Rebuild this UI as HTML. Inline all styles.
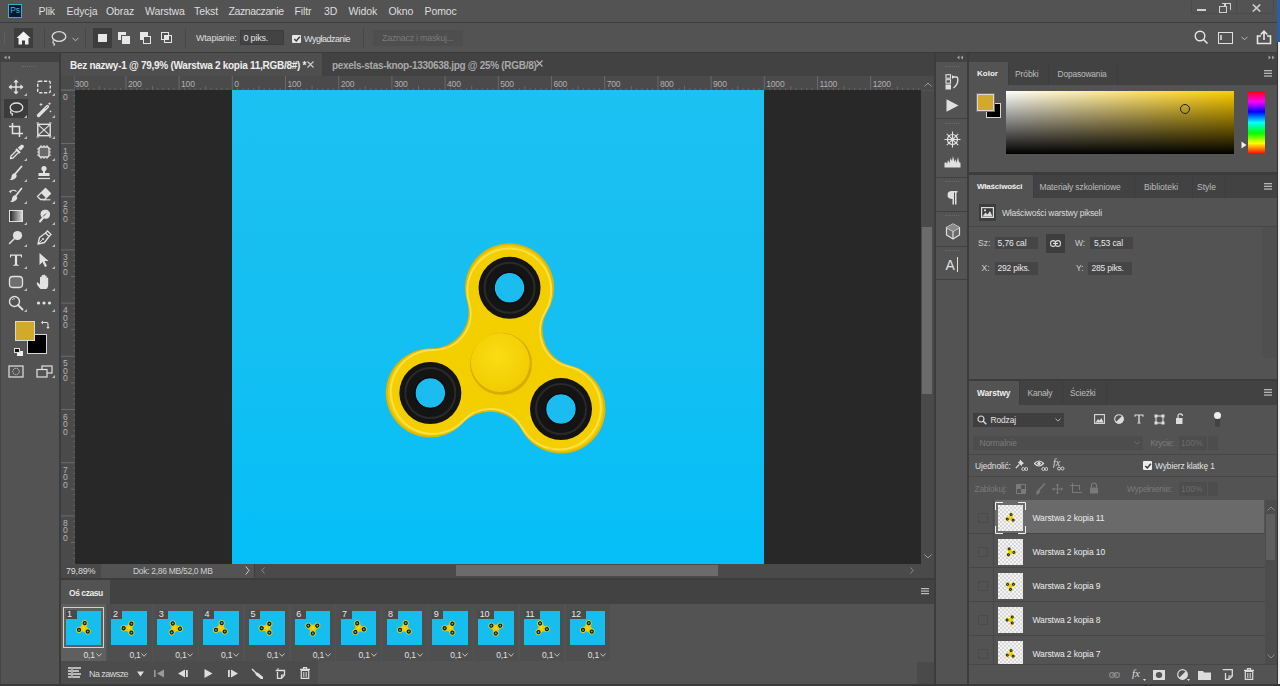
<!DOCTYPE html>
<html><head><meta charset="utf-8">
<style>
*{margin:0;padding:0;box-sizing:border-box}
html,body{width:1280px;height:686px;overflow:hidden;background:#535353;font-family:"Liberation Sans",sans-serif;color:#e8e8e8}
.a{position:absolute}
.t{position:absolute;white-space:nowrap;line-height:1}
</style></head><body>
<!-- menu bar -->
<div class="a" style="left:0;top:0;width:1280px;height:22px;background:#535353"></div>
<div class="a" style="left:0;top:22px;width:1280px;height:1px;background:#3c3c3c"></div>
<!-- options bar -->
<div class="a" style="left:0;top:23px;width:1280px;height:29px;background:#535353"></div>
<div class="a" style="left:0;top:52px;width:1280px;height:1px;background:#3a3a3a"></div>
<!-- toolbar -->
<div class="a" style="left:0;top:53px;width:59px;height:633px;background:#535353"></div>
<div class="a" style="left:0;top:53px;width:59px;height:9px;background:#424242"></div>
<div class="a" style="left:59px;top:53px;width:2px;height:633px;background:#3c3c3c"></div>
<!-- tab bar -->
<div class="a" style="left:61px;top:53px;width:873px;height:23px;background:#424242"></div>
<div class="a" style="left:61px;top:53px;width:261px;height:23px;background:#4e4e4e"></div>
<!-- rulers -->
<div class="a" style="left:61px;top:76px;width:873px;height:14px;background:#4a4a4a"></div>
<div class="a" style="left:61px;top:76px;width:14px;height:488px;background:#4a4a4a"></div>
<!-- pasteboard -->
<div class="a" style="left:75px;top:90px;width:846px;height:474px;background:#282828"></div>
<div class="a" style="left:232px;top:90px;width:532px;height:474px;background:linear-gradient(to bottom,#1cc1f1 0%,#15bff2 50%,#04bff7 100%)"></div>
<svg width="0" height="0" style="position:absolute"><defs>
<radialGradient id="hubg" cx="0.45" cy="0.4" r="0.6"><stop offset="0" stop-color="#fbdc16"/><stop offset="1" stop-color="#f2cc00"/></radialGradient>
<g id="spin"><path d="M-32.35 -62.75 A43.5 43.5 0 1 1 46.57 -53.06 A37.91 37.91 0 0 0 70.52 3.36 A43.5 43.5 0 1 1 22.67 66.86 A37.91 37.91 0 0 0 -38.17 59.39 A43.5 43.5 0 1 1 -69.24 -13.80 A37.91 37.91 0 0 0 -32.35 -62.75 Z" fill="#f4cf00" stroke="#e2b800" stroke-width="2"/><path d="M-32.35 -62.75 A43.5 43.5 0 1 1 46.57 -53.06 A37.91 37.91 0 0 0 70.52 3.36 A43.5 43.5 0 1 1 22.67 66.86 A37.91 37.91 0 0 0 -38.17 59.39 A43.5 43.5 0 1 1 -69.24 -13.80 A37.91 37.91 0 0 0 -32.35 -62.75 Z" fill="none" stroke="#fbe04a" stroke-width="2" transform="scale(0.965)"/><circle cx="9.26" cy="-75.43" r="31" fill="#141414"/><circle cx="9.26" cy="-75.43" r="25" fill="none" stroke="#2a2a2a" stroke-width="2"/><circle cx="9.26" cy="-75.43" r="15" fill="#1bbdf0"/><circle cx="9.26" cy="-75.43" r="15.5" fill="none" stroke="#0c0c0c" stroke-width="1.5"/><circle cx="60.7" cy="45.74" r="31" fill="#141414"/><circle cx="60.7" cy="45.74" r="25" fill="none" stroke="#2a2a2a" stroke-width="2"/><circle cx="60.7" cy="45.74" r="15" fill="#1bbdf0"/><circle cx="60.7" cy="45.74" r="15.5" fill="none" stroke="#0c0c0c" stroke-width="1.5"/><circle cx="-69.96" cy="29.7" r="31" fill="#141414"/><circle cx="-69.96" cy="29.7" r="25" fill="none" stroke="#2a2a2a" stroke-width="2"/><circle cx="-69.96" cy="29.7" r="15" fill="#1bbdf0"/><circle cx="-69.96" cy="29.7" r="15.5" fill="none" stroke="#0c0c0c" stroke-width="1.5"/><circle cx="0.8" cy="0.5" r="31" fill="#d6ad00"/><circle cx="0" cy="-0.8" r="29.5" fill="url(#hubg)"/></g>
</defs></svg>
<svg class="a" style="left:232px;top:90px" width="532" height="474" viewBox="232 90 532 474"><use href="#spin" transform="translate(500.3 363.3)"/></svg>
<!-- v scrollbar -->
<div class="a" style="left:921px;top:91px;width:13px;height:473px;background:#4a4a4a"></div>
<div class="a" style="left:922px;top:227px;width:10px;height:167px;background:#6b6b6b"></div>
<!-- status bar -->
<div class="a" style="left:61px;top:564px;width:873px;height:14px;background:#4a4a4a"></div>
<div class="a" style="left:456px;top:565px;width:262px;height:11px;background:#6b6b6b"></div>
<div class="a" style="left:61px;top:578px;width:873px;height:2px;background:#3c3c3c"></div>
<!-- timeline -->
<div class="a" style="left:61px;top:580px;width:873px;height:24px;background:#424242"></div>
<div class="a" style="left:61px;top:580px;width:49px;height:24px;background:#535353"></div>
<div class="a" style="left:61px;top:604px;width:873px;height:82px;background:#535353"></div>
<!-- icon strip -->
<div class="a" style="left:934px;top:53px;width:2px;height:633px;background:#3c3c3c"></div>
<div class="a" style="left:936px;top:53px;width:31px;height:633px;background:#535353"></div>
<div class="a" style="left:936px;top:53px;width:31px;height:9px;background:#424242"></div>
<div class="a" style="left:967px;top:53px;width:2px;height:633px;background:#3c3c3c"></div>
<!-- right panels -->
<div class="a" style="left:969px;top:53px;width:308px;height:9px;background:#424242"></div>
<div class="a" style="left:969px;top:62px;width:308px;height:23px;background:#424242"></div>
<div class="a" style="left:969px;top:62px;width:39px;height:23px;background:#535353"></div>
<div class="a" style="left:969px;top:172px;width:308px;height:3px;background:#3c3c3c"></div>
<div class="a" style="left:969px;top:175px;width:308px;height:23px;background:#424242"></div>
<div class="a" style="left:969px;top:175px;width:64px;height:23px;background:#535353"></div>
<div class="a" style="left:969px;top:379px;width:308px;height:2px;background:#3c3c3c"></div>
<div class="a" style="left:969px;top:381px;width:308px;height:24px;background:#424242"></div>
<div class="a" style="left:969px;top:381px;width:50px;height:24px;background:#535353"></div>
<div class="a" style="left:1277px;top:0;width:3px;height:42px;background:#2b5ea6"></div>
<div class="a" style="left:1277px;top:42px;width:1px;height:644px;background:#333"></div>
<div class="a" style="left:1278px;top:42px;width:2px;height:644px;background:#f0f0f0"></div>

<!-- MENU CONTENT -->
<div class="a" style="left:8px;top:4px;width:14px;height:14px;background:#001b2e;border:1.3px solid #3aaad8"></div>
<div class="t" style="left:10.3px;top:6.3px;font-size:8.5px;font-weight:400;color:#48b6de;letter-spacing:-0.3px">Ps</div>
<div class="t" style="left:38.5px;top:6px;font-size:10.5px;color:#dedede;letter-spacing:-0.1px">Plik</div>
<div class="t" style="left:66.5px;top:6px;font-size:10.5px;color:#dedede;letter-spacing:-0.1px">Edycja</div>
<div class="t" style="left:106px;top:6px;font-size:10.5px;color:#dedede;letter-spacing:-0.1px">Obraz</div>
<div class="t" style="left:145px;top:6px;font-size:10.5px;color:#dedede;letter-spacing:-0.1px">Warstwa</div>
<div class="t" style="left:194px;top:6px;font-size:10.5px;color:#dedede;letter-spacing:-0.1px">Tekst</div>
<div class="t" style="left:228.5px;top:6px;font-size:10.5px;color:#dedede;letter-spacing:-0.4px">Zaznaczanie</div>
<div class="t" style="left:294.5px;top:6px;font-size:10.5px;color:#dedede;letter-spacing:-0.1px">Filtr</div>
<div class="t" style="left:324px;top:6px;font-size:10.5px;color:#dedede;letter-spacing:-0.1px">3D</div>
<div class="t" style="left:348.5px;top:6px;font-size:10.5px;color:#dedede;letter-spacing:-0.1px">Widok</div>
<div class="t" style="left:388.5px;top:6px;font-size:10.5px;color:#dedede;letter-spacing:-0.1px">Okno</div>
<div class="t" style="left:424.5px;top:6px;font-size:10.5px;color:#dedede;letter-spacing:-0.1px">Pomoc</div>
<!-- window controls -->
<div class="a" style="left:1191px;top:-1px;width:83px;height:15px;border:1px solid #4b4b4b"></div>
<div class="a" style="left:1236px;top:0;width:1px;height:14px;background:#4b4b4b"></div>
<div class="a" style="left:1197px;top:9px;width:9px;height:2px;background:#d0d0d0"></div>
<div class="a" style="left:1219px;top:6px;width:8px;height:7px;border:1.5px solid #d0d0d0"></div>
<div class="a" style="left:1222px;top:3px;width:9px;height:7px;border:1.5px solid #d0d0d0;border-left:none;border-bottom:none"></div>
<div class="a" style="left:1224px;top:3px;width:1.5px;height:3px;background:#d0d0d0"></div>
<svg class="a" style="left:1252px;top:4px" width="9" height="8" viewBox="0 0 9 8"><path d="M0.8 0.5L8.2 7.5M8.2 0.5L0.8 7.5" stroke="#d0d0d0" stroke-width="1.6"/></svg>
<!-- OPTIONS CONTENT -->
<div class="a" style="left:4px;top:32px;width:1px;height:11px;border-left:1px dotted #6a6a6a"></div>
<div class="a" style="left:14px;top:28px;width:19px;height:20px;background:#3d3d3d"></div>
<svg class="a" style="left:16px;top:31px" width="15" height="14" viewBox="0 0 15 14"><path d="M7.5 0.5L0.5 7H2.5V13.5H6V9.5H9V13.5H12.5V7H14.5Z" fill="#f2f2f2"/></svg>
<div class="a" style="left:44px;top:28px;width:1px;height:20px;background:#474747"></div>
<svg class="a" style="left:50px;top:30px" width="17" height="16" viewBox="0 0 17 16"><ellipse cx="9" cy="6.5" rx="6.8" ry="4.8" fill="none" stroke="#dcdcdc" stroke-width="1.3"/><path d="M4 10.5C2.5 11 2.5 13 4 13.5C5 14 4.5 15 3.5 15.5" fill="none" stroke="#dcdcdc" stroke-width="1.2"/></svg>
<svg class="a" style="left:72px;top:37px" width="7" height="5" viewBox="0 0 7 5"><path d="M0.5 0.8L3.5 3.8L6.5 0.8" fill="none" stroke="#bdbdbd" stroke-width="1"/></svg>
<div class="a" style="left:85px;top:28px;width:1px;height:20px;background:#474747"></div>
<div class="a" style="left:93px;top:28px;width:19px;height:20px;background:#3d3d3d"></div>
<div class="a" style="left:98px;top:34px;width:9px;height:8px;background:#e6e6e6"></div>
<div class="a" style="left:118px;top:32px;width:8px;height:8px;background:#e6e6e6"></div>
<div class="a" style="left:122px;top:36px;width:8px;height:8px;background:#e6e6e6;box-shadow:-1px -1px 0 #535353"></div>
<div class="a" style="left:140px;top:32px;width:8px;height:8px;background:#e6e6e6"></div>
<div class="a" style="left:143px;top:36px;width:8px;height:8px;background:#535353;border:1.3px solid #e6e6e6"></div>
<div class="a" style="left:161px;top:32px;width:8px;height:8px;border:1.3px solid #e6e6e6"></div>
<div class="a" style="left:164px;top:35px;width:8px;height:8px;border:1.3px solid #e6e6e6"></div>
<div class="a" style="left:164px;top:35px;width:5px;height:5px;background:#e6e6e6"></div>
<div class="a" style="left:185px;top:28px;width:1px;height:20px;background:#474747"></div>
<div class="t" style="left:196px;top:34px;font-size:9px;color:#dcdcdc;letter-spacing:-0.2px">Wtapianie:</div>
<div class="a" style="left:240px;top:30px;width:44px;height:15px;background:#434343;border:1px solid #3c3c3c"></div>
<div class="t" style="left:243.5px;top:33.5px;font-size:9px;color:#e2e2e2;letter-spacing:-0.2px">0 piks.</div>
<div class="a" style="left:292px;top:35px;width:9px;height:8px;background:#e6e6e6;border-radius:1px"></div>
<svg class="a" style="left:293px;top:35px" width="8" height="8" viewBox="0 0 8 8"><path d="M1.3 4L3.3 6L6.8 1.8" fill="none" stroke="#3a3a3a" stroke-width="1.4"/></svg>
<div class="t" style="left:304px;top:34.5px;font-size:9px;color:#e2e2e2;letter-spacing:-0.5px">Wygładzanie</div>
<div class="a" style="left:363px;top:28px;width:1px;height:20px;background:#474747"></div>
<div class="a" style="left:373px;top:30px;width:90px;height:16px;background:#4e4e4e;border-radius:1px"></div>
<div class="t" style="left:382px;top:34px;font-size:9px;color:#7a7a7a;letter-spacing:-0.3px">Zaznacz i maskuj...</div>
<svg class="a" style="left:1194px;top:30px" width="15" height="15" viewBox="0 0 15 15"><circle cx="6" cy="6" r="4.8" fill="none" stroke="#e6e6e6" stroke-width="1.4"/><path d="M9.5 9.5L13.5 13.5" stroke="#e6e6e6" stroke-width="1.6"/></svg>
<div class="a" style="left:1218px;top:32px;width:15px;height:12px;border:1.3px solid #e0e0e0"></div>
<div class="a" style="left:1220px;top:35px;width:2px;height:5px;border:1px solid #c0c0c0"></div>
<svg class="a" style="left:1241px;top:36px" width="7" height="5" viewBox="0 0 7 5"><path d="M0.5 0.8L3.5 3.8L6.5 0.8" fill="none" stroke="#bdbdbd" stroke-width="1"/></svg>
<svg class="a" style="left:1256px;top:30px" width="16" height="15" viewBox="0 0 16 15"><path d="M5 6H1.5V13.5H14.5V6H11" fill="none" stroke="#e6e6e6" stroke-width="1.6"/><path d="M8 10V1.5M4.8 4.5L8 1.2L11.2 4.5" fill="none" stroke="#e6e6e6" stroke-width="1.6"/></svg>
<!-- TABS -->
<div class="t" style="left:70px;top:61px;font-size:10px;font-weight:700;color:#eeeeee;letter-spacing:-0.27px">Bez nazwy-1 @ 79,9% (Warstwa 2 kopia 11,RGB/8#) *</div>
<svg class="a" style="left:307px;top:61px" width="7" height="7" viewBox="0 0 7 7"><path d="M0.5 0.5L6.5 6.5M6.5 0.5L0.5 6.5" stroke="#cfcfcf" stroke-width="1.1"/></svg>
<div class="t" style="left:332px;top:61px;font-size:10px;font-weight:700;color:#a9a9a9;letter-spacing:-0.3px">pexels-stas-knop-1330638.jpg @ 25% (RGB/8)</div>
<svg class="a" style="left:536px;top:60px" width="7" height="7" viewBox="0 0 7 7"><path d="M0.5 0.5L6.5 6.5M6.5 0.5L0.5 6.5" stroke="#b9b9b9" stroke-width="1.1"/></svg>
<svg class="a" style="left:75px;top:76px" width="846" height="14" viewBox="75 76 846 14">
<rect x="77.52" y="88" width="1" height="2" fill="#666"/>
<rect x="82.84" y="88" width="1" height="2" fill="#666"/>
<rect x="88.16" y="88" width="1" height="2" fill="#666"/>
<rect x="93.48" y="88" width="1" height="2" fill="#666"/>
<rect x="98.80" y="86" width="1" height="4" fill="#6a6a6a"/>
<rect x="104.12" y="88" width="1" height="2" fill="#666"/>
<rect x="109.44" y="88" width="1" height="2" fill="#666"/>
<rect x="114.76" y="88" width="1" height="2" fill="#666"/>
<rect x="120.08" y="88" width="1" height="2" fill="#666"/>
<rect x="125.40" y="76" width="1" height="14" fill="#6a6a6a"/>
<rect x="130.72" y="88" width="1" height="2" fill="#666"/>
<rect x="136.04" y="88" width="1" height="2" fill="#666"/>
<rect x="141.36" y="88" width="1" height="2" fill="#666"/>
<rect x="146.68" y="88" width="1" height="2" fill="#666"/>
<rect x="152.00" y="86" width="1" height="4" fill="#6a6a6a"/>
<rect x="157.32" y="88" width="1" height="2" fill="#666"/>
<rect x="162.64" y="88" width="1" height="2" fill="#666"/>
<rect x="167.96" y="88" width="1" height="2" fill="#666"/>
<rect x="173.28" y="88" width="1" height="2" fill="#666"/>
<rect x="178.60" y="76" width="1" height="14" fill="#6a6a6a"/>
<rect x="183.92" y="88" width="1" height="2" fill="#666"/>
<rect x="189.24" y="88" width="1" height="2" fill="#666"/>
<rect x="194.56" y="88" width="1" height="2" fill="#666"/>
<rect x="199.88" y="88" width="1" height="2" fill="#666"/>
<rect x="205.20" y="86" width="1" height="4" fill="#6a6a6a"/>
<rect x="210.52" y="88" width="1" height="2" fill="#666"/>
<rect x="215.84" y="88" width="1" height="2" fill="#666"/>
<rect x="221.16" y="88" width="1" height="2" fill="#666"/>
<rect x="226.48" y="88" width="1" height="2" fill="#666"/>
<rect x="231.80" y="76" width="1" height="14" fill="#6a6a6a"/>
<rect x="237.12" y="88" width="1" height="2" fill="#666"/>
<rect x="242.44" y="88" width="1" height="2" fill="#666"/>
<rect x="247.76" y="88" width="1" height="2" fill="#666"/>
<rect x="253.08" y="88" width="1" height="2" fill="#666"/>
<rect x="258.40" y="86" width="1" height="4" fill="#6a6a6a"/>
<rect x="263.72" y="88" width="1" height="2" fill="#666"/>
<rect x="269.04" y="88" width="1" height="2" fill="#666"/>
<rect x="274.36" y="88" width="1" height="2" fill="#666"/>
<rect x="279.68" y="88" width="1" height="2" fill="#666"/>
<rect x="285.00" y="76" width="1" height="14" fill="#6a6a6a"/>
<rect x="290.32" y="88" width="1" height="2" fill="#666"/>
<rect x="295.64" y="88" width="1" height="2" fill="#666"/>
<rect x="300.96" y="88" width="1" height="2" fill="#666"/>
<rect x="306.28" y="88" width="1" height="2" fill="#666"/>
<rect x="311.60" y="86" width="1" height="4" fill="#6a6a6a"/>
<rect x="316.92" y="88" width="1" height="2" fill="#666"/>
<rect x="322.24" y="88" width="1" height="2" fill="#666"/>
<rect x="327.56" y="88" width="1" height="2" fill="#666"/>
<rect x="332.88" y="88" width="1" height="2" fill="#666"/>
<rect x="338.20" y="76" width="1" height="14" fill="#6a6a6a"/>
<rect x="343.52" y="88" width="1" height="2" fill="#666"/>
<rect x="348.84" y="88" width="1" height="2" fill="#666"/>
<rect x="354.16" y="88" width="1" height="2" fill="#666"/>
<rect x="359.48" y="88" width="1" height="2" fill="#666"/>
<rect x="364.80" y="86" width="1" height="4" fill="#6a6a6a"/>
<rect x="370.12" y="88" width="1" height="2" fill="#666"/>
<rect x="375.44" y="88" width="1" height="2" fill="#666"/>
<rect x="380.76" y="88" width="1" height="2" fill="#666"/>
<rect x="386.08" y="88" width="1" height="2" fill="#666"/>
<rect x="391.40" y="76" width="1" height="14" fill="#6a6a6a"/>
<rect x="396.72" y="88" width="1" height="2" fill="#666"/>
<rect x="402.04" y="88" width="1" height="2" fill="#666"/>
<rect x="407.36" y="88" width="1" height="2" fill="#666"/>
<rect x="412.68" y="88" width="1" height="2" fill="#666"/>
<rect x="418.00" y="86" width="1" height="4" fill="#6a6a6a"/>
<rect x="423.32" y="88" width="1" height="2" fill="#666"/>
<rect x="428.64" y="88" width="1" height="2" fill="#666"/>
<rect x="433.96" y="88" width="1" height="2" fill="#666"/>
<rect x="439.28" y="88" width="1" height="2" fill="#666"/>
<rect x="444.60" y="76" width="1" height="14" fill="#6a6a6a"/>
<rect x="449.92" y="88" width="1" height="2" fill="#666"/>
<rect x="455.24" y="88" width="1" height="2" fill="#666"/>
<rect x="460.56" y="88" width="1" height="2" fill="#666"/>
<rect x="465.88" y="88" width="1" height="2" fill="#666"/>
<rect x="471.20" y="86" width="1" height="4" fill="#6a6a6a"/>
<rect x="476.52" y="88" width="1" height="2" fill="#666"/>
<rect x="481.84" y="88" width="1" height="2" fill="#666"/>
<rect x="487.16" y="88" width="1" height="2" fill="#666"/>
<rect x="492.48" y="88" width="1" height="2" fill="#666"/>
<rect x="497.80" y="76" width="1" height="14" fill="#6a6a6a"/>
<rect x="503.12" y="88" width="1" height="2" fill="#666"/>
<rect x="508.44" y="88" width="1" height="2" fill="#666"/>
<rect x="513.76" y="88" width="1" height="2" fill="#666"/>
<rect x="519.08" y="88" width="1" height="2" fill="#666"/>
<rect x="524.40" y="86" width="1" height="4" fill="#6a6a6a"/>
<rect x="529.72" y="88" width="1" height="2" fill="#666"/>
<rect x="535.04" y="88" width="1" height="2" fill="#666"/>
<rect x="540.36" y="88" width="1" height="2" fill="#666"/>
<rect x="545.68" y="88" width="1" height="2" fill="#666"/>
<rect x="551.00" y="76" width="1" height="14" fill="#6a6a6a"/>
<rect x="556.32" y="88" width="1" height="2" fill="#666"/>
<rect x="561.64" y="88" width="1" height="2" fill="#666"/>
<rect x="566.96" y="88" width="1" height="2" fill="#666"/>
<rect x="572.28" y="88" width="1" height="2" fill="#666"/>
<rect x="577.60" y="86" width="1" height="4" fill="#6a6a6a"/>
<rect x="582.92" y="88" width="1" height="2" fill="#666"/>
<rect x="588.24" y="88" width="1" height="2" fill="#666"/>
<rect x="593.56" y="88" width="1" height="2" fill="#666"/>
<rect x="598.88" y="88" width="1" height="2" fill="#666"/>
<rect x="604.20" y="76" width="1" height="14" fill="#6a6a6a"/>
<rect x="609.52" y="88" width="1" height="2" fill="#666"/>
<rect x="614.84" y="88" width="1" height="2" fill="#666"/>
<rect x="620.16" y="88" width="1" height="2" fill="#666"/>
<rect x="625.48" y="88" width="1" height="2" fill="#666"/>
<rect x="630.80" y="86" width="1" height="4" fill="#6a6a6a"/>
<rect x="636.12" y="88" width="1" height="2" fill="#666"/>
<rect x="641.44" y="88" width="1" height="2" fill="#666"/>
<rect x="646.76" y="88" width="1" height="2" fill="#666"/>
<rect x="652.08" y="88" width="1" height="2" fill="#666"/>
<rect x="657.40" y="76" width="1" height="14" fill="#6a6a6a"/>
<rect x="662.72" y="88" width="1" height="2" fill="#666"/>
<rect x="668.04" y="88" width="1" height="2" fill="#666"/>
<rect x="673.36" y="88" width="1" height="2" fill="#666"/>
<rect x="678.68" y="88" width="1" height="2" fill="#666"/>
<rect x="684.00" y="86" width="1" height="4" fill="#6a6a6a"/>
<rect x="689.32" y="88" width="1" height="2" fill="#666"/>
<rect x="694.64" y="88" width="1" height="2" fill="#666"/>
<rect x="699.96" y="88" width="1" height="2" fill="#666"/>
<rect x="705.28" y="88" width="1" height="2" fill="#666"/>
<rect x="710.60" y="76" width="1" height="14" fill="#6a6a6a"/>
<rect x="715.92" y="88" width="1" height="2" fill="#666"/>
<rect x="721.24" y="88" width="1" height="2" fill="#666"/>
<rect x="726.56" y="88" width="1" height="2" fill="#666"/>
<rect x="731.88" y="88" width="1" height="2" fill="#666"/>
<rect x="737.20" y="86" width="1" height="4" fill="#6a6a6a"/>
<rect x="742.52" y="88" width="1" height="2" fill="#666"/>
<rect x="747.84" y="88" width="1" height="2" fill="#666"/>
<rect x="753.16" y="88" width="1" height="2" fill="#666"/>
<rect x="758.48" y="88" width="1" height="2" fill="#666"/>
<rect x="763.80" y="76" width="1" height="14" fill="#6a6a6a"/>
<rect x="769.12" y="88" width="1" height="2" fill="#666"/>
<rect x="774.44" y="88" width="1" height="2" fill="#666"/>
<rect x="779.76" y="88" width="1" height="2" fill="#666"/>
<rect x="785.08" y="88" width="1" height="2" fill="#666"/>
<rect x="790.40" y="86" width="1" height="4" fill="#6a6a6a"/>
<rect x="795.72" y="88" width="1" height="2" fill="#666"/>
<rect x="801.04" y="88" width="1" height="2" fill="#666"/>
<rect x="806.36" y="88" width="1" height="2" fill="#666"/>
<rect x="811.68" y="88" width="1" height="2" fill="#666"/>
<rect x="817.00" y="76" width="1" height="14" fill="#6a6a6a"/>
<rect x="822.32" y="88" width="1" height="2" fill="#666"/>
<rect x="827.64" y="88" width="1" height="2" fill="#666"/>
<rect x="832.96" y="88" width="1" height="2" fill="#666"/>
<rect x="838.28" y="88" width="1" height="2" fill="#666"/>
<rect x="843.60" y="86" width="1" height="4" fill="#6a6a6a"/>
<rect x="848.92" y="88" width="1" height="2" fill="#666"/>
<rect x="854.24" y="88" width="1" height="2" fill="#666"/>
<rect x="859.56" y="88" width="1" height="2" fill="#666"/>
<rect x="864.88" y="88" width="1" height="2" fill="#666"/>
<rect x="870.20" y="76" width="1" height="14" fill="#6a6a6a"/>
<rect x="875.52" y="88" width="1" height="2" fill="#666"/>
<rect x="880.84" y="88" width="1" height="2" fill="#666"/>
<rect x="886.16" y="88" width="1" height="2" fill="#666"/>
<rect x="891.48" y="88" width="1" height="2" fill="#666"/>
<rect x="896.80" y="86" width="1" height="4" fill="#6a6a6a"/>
<rect x="902.12" y="88" width="1" height="2" fill="#666"/>
<rect x="907.44" y="88" width="1" height="2" fill="#666"/>
<rect x="912.76" y="88" width="1" height="2" fill="#666"/>
<rect x="918.08" y="88" width="1" height="2" fill="#666"/>
</svg>
<div class="t" style="left:74.7px;top:79.5px;font-size:8.5px;color:#b0b0b0;letter-spacing:-0.2px">300</div>
<div class="t" style="left:127.9px;top:79.5px;font-size:8.5px;color:#b0b0b0;letter-spacing:-0.2px">200</div>
<div class="t" style="left:181.1px;top:79.5px;font-size:8.5px;color:#b0b0b0;letter-spacing:-0.2px">100</div>
<div class="t" style="left:234.3px;top:79.5px;font-size:8.5px;color:#b0b0b0;letter-spacing:-0.2px">0</div>
<div class="t" style="left:287.5px;top:79.5px;font-size:8.5px;color:#b0b0b0;letter-spacing:-0.2px">100</div>
<div class="t" style="left:340.7px;top:79.5px;font-size:8.5px;color:#b0b0b0;letter-spacing:-0.2px">200</div>
<div class="t" style="left:393.9px;top:79.5px;font-size:8.5px;color:#b0b0b0;letter-spacing:-0.2px">300</div>
<div class="t" style="left:447.1px;top:79.5px;font-size:8.5px;color:#b0b0b0;letter-spacing:-0.2px">400</div>
<div class="t" style="left:500.3px;top:79.5px;font-size:8.5px;color:#b0b0b0;letter-spacing:-0.2px">500</div>
<div class="t" style="left:553.5px;top:79.5px;font-size:8.5px;color:#b0b0b0;letter-spacing:-0.2px">600</div>
<div class="t" style="left:606.7px;top:79.5px;font-size:8.5px;color:#b0b0b0;letter-spacing:-0.2px">700</div>
<div class="t" style="left:659.9px;top:79.5px;font-size:8.5px;color:#b0b0b0;letter-spacing:-0.2px">800</div>
<div class="t" style="left:713.1px;top:79.5px;font-size:8.5px;color:#b0b0b0;letter-spacing:-0.2px">900</div>
<div class="t" style="left:766.3px;top:79.5px;font-size:8.5px;color:#b0b0b0;letter-spacing:-0.2px">1000</div>
<div class="t" style="left:819.5px;top:79.5px;font-size:8.5px;color:#b0b0b0;letter-spacing:-0.2px">1100</div>
<div class="t" style="left:872.7px;top:79.5px;font-size:8.5px;color:#b0b0b0;letter-spacing:-0.2px">1200</div>
<div class="a" style="left:61px;top:76px;width:14px;height:14px;background:#4a4a4a;border-right:1px solid #5a5a5a;border-bottom:1px solid #5a5a5a"></div>
<svg class="a" style="left:61px;top:90px" width="14" height="474" viewBox="61 90 14 474">
<rect x="61" y="89.80" width="14" height="1" fill="#6a6a6a"/>
<rect x="73" y="95.12" width="2" height="1" fill="#666"/>
<rect x="73" y="100.44" width="2" height="1" fill="#666"/>
<rect x="73" y="105.76" width="2" height="1" fill="#666"/>
<rect x="73" y="111.08" width="2" height="1" fill="#666"/>
<rect x="71" y="116.40" width="4" height="1" fill="#6a6a6a"/>
<rect x="73" y="121.72" width="2" height="1" fill="#666"/>
<rect x="73" y="127.04" width="2" height="1" fill="#666"/>
<rect x="73" y="132.36" width="2" height="1" fill="#666"/>
<rect x="73" y="137.68" width="2" height="1" fill="#666"/>
<rect x="61" y="143.00" width="14" height="1" fill="#6a6a6a"/>
<rect x="73" y="148.32" width="2" height="1" fill="#666"/>
<rect x="73" y="153.64" width="2" height="1" fill="#666"/>
<rect x="73" y="158.96" width="2" height="1" fill="#666"/>
<rect x="73" y="164.28" width="2" height="1" fill="#666"/>
<rect x="71" y="169.60" width="4" height="1" fill="#6a6a6a"/>
<rect x="73" y="174.92" width="2" height="1" fill="#666"/>
<rect x="73" y="180.24" width="2" height="1" fill="#666"/>
<rect x="73" y="185.56" width="2" height="1" fill="#666"/>
<rect x="73" y="190.88" width="2" height="1" fill="#666"/>
<rect x="61" y="196.20" width="14" height="1" fill="#6a6a6a"/>
<rect x="73" y="201.52" width="2" height="1" fill="#666"/>
<rect x="73" y="206.84" width="2" height="1" fill="#666"/>
<rect x="73" y="212.16" width="2" height="1" fill="#666"/>
<rect x="73" y="217.48" width="2" height="1" fill="#666"/>
<rect x="71" y="222.80" width="4" height="1" fill="#6a6a6a"/>
<rect x="73" y="228.12" width="2" height="1" fill="#666"/>
<rect x="73" y="233.44" width="2" height="1" fill="#666"/>
<rect x="73" y="238.76" width="2" height="1" fill="#666"/>
<rect x="73" y="244.08" width="2" height="1" fill="#666"/>
<rect x="61" y="249.40" width="14" height="1" fill="#6a6a6a"/>
<rect x="73" y="254.72" width="2" height="1" fill="#666"/>
<rect x="73" y="260.04" width="2" height="1" fill="#666"/>
<rect x="73" y="265.36" width="2" height="1" fill="#666"/>
<rect x="73" y="270.68" width="2" height="1" fill="#666"/>
<rect x="71" y="276.00" width="4" height="1" fill="#6a6a6a"/>
<rect x="73" y="281.32" width="2" height="1" fill="#666"/>
<rect x="73" y="286.64" width="2" height="1" fill="#666"/>
<rect x="73" y="291.96" width="2" height="1" fill="#666"/>
<rect x="73" y="297.28" width="2" height="1" fill="#666"/>
<rect x="61" y="302.60" width="14" height="1" fill="#6a6a6a"/>
<rect x="73" y="307.92" width="2" height="1" fill="#666"/>
<rect x="73" y="313.24" width="2" height="1" fill="#666"/>
<rect x="73" y="318.56" width="2" height="1" fill="#666"/>
<rect x="73" y="323.88" width="2" height="1" fill="#666"/>
<rect x="71" y="329.20" width="4" height="1" fill="#6a6a6a"/>
<rect x="73" y="334.52" width="2" height="1" fill="#666"/>
<rect x="73" y="339.84" width="2" height="1" fill="#666"/>
<rect x="73" y="345.16" width="2" height="1" fill="#666"/>
<rect x="73" y="350.48" width="2" height="1" fill="#666"/>
<rect x="61" y="355.80" width="14" height="1" fill="#6a6a6a"/>
<rect x="73" y="361.12" width="2" height="1" fill="#666"/>
<rect x="73" y="366.44" width="2" height="1" fill="#666"/>
<rect x="73" y="371.76" width="2" height="1" fill="#666"/>
<rect x="73" y="377.08" width="2" height="1" fill="#666"/>
<rect x="71" y="382.40" width="4" height="1" fill="#6a6a6a"/>
<rect x="73" y="387.72" width="2" height="1" fill="#666"/>
<rect x="73" y="393.04" width="2" height="1" fill="#666"/>
<rect x="73" y="398.36" width="2" height="1" fill="#666"/>
<rect x="73" y="403.68" width="2" height="1" fill="#666"/>
<rect x="61" y="409.00" width="14" height="1" fill="#6a6a6a"/>
<rect x="73" y="414.32" width="2" height="1" fill="#666"/>
<rect x="73" y="419.64" width="2" height="1" fill="#666"/>
<rect x="73" y="424.96" width="2" height="1" fill="#666"/>
<rect x="73" y="430.28" width="2" height="1" fill="#666"/>
<rect x="71" y="435.60" width="4" height="1" fill="#6a6a6a"/>
<rect x="73" y="440.92" width="2" height="1" fill="#666"/>
<rect x="73" y="446.24" width="2" height="1" fill="#666"/>
<rect x="73" y="451.56" width="2" height="1" fill="#666"/>
<rect x="73" y="456.88" width="2" height="1" fill="#666"/>
<rect x="61" y="462.20" width="14" height="1" fill="#6a6a6a"/>
<rect x="73" y="467.52" width="2" height="1" fill="#666"/>
<rect x="73" y="472.84" width="2" height="1" fill="#666"/>
<rect x="73" y="478.16" width="2" height="1" fill="#666"/>
<rect x="73" y="483.48" width="2" height="1" fill="#666"/>
<rect x="71" y="488.80" width="4" height="1" fill="#6a6a6a"/>
<rect x="73" y="494.12" width="2" height="1" fill="#666"/>
<rect x="73" y="499.44" width="2" height="1" fill="#666"/>
<rect x="73" y="504.76" width="2" height="1" fill="#666"/>
<rect x="73" y="510.08" width="2" height="1" fill="#666"/>
<rect x="61" y="515.40" width="14" height="1" fill="#6a6a6a"/>
<rect x="73" y="520.72" width="2" height="1" fill="#666"/>
<rect x="73" y="526.04" width="2" height="1" fill="#666"/>
<rect x="73" y="531.36" width="2" height="1" fill="#666"/>
<rect x="73" y="536.68" width="2" height="1" fill="#666"/>
<rect x="71" y="542.00" width="4" height="1" fill="#6a6a6a"/>
<rect x="73" y="547.32" width="2" height="1" fill="#666"/>
<rect x="73" y="552.64" width="2" height="1" fill="#666"/>
<rect x="73" y="557.96" width="2" height="1" fill="#666"/>
<rect x="73" y="563.28" width="2" height="1" fill="#666"/>
</svg>
<div class="t" style="left:63px;top:93.3px;font-size:8.5px;color:#b4b4b4">0</div>
<div class="t" style="left:63px;top:146.5px;font-size:8.5px;color:#b4b4b4">1</div>
<div class="t" style="left:63px;top:154.0px;font-size:8.5px;color:#b4b4b4">0</div>
<div class="t" style="left:63px;top:161.5px;font-size:8.5px;color:#b4b4b4">0</div>
<div class="t" style="left:63px;top:199.7px;font-size:8.5px;color:#b4b4b4">2</div>
<div class="t" style="left:63px;top:207.2px;font-size:8.5px;color:#b4b4b4">0</div>
<div class="t" style="left:63px;top:214.7px;font-size:8.5px;color:#b4b4b4">0</div>
<div class="t" style="left:63px;top:252.9px;font-size:8.5px;color:#b4b4b4">3</div>
<div class="t" style="left:63px;top:260.4px;font-size:8.5px;color:#b4b4b4">0</div>
<div class="t" style="left:63px;top:267.9px;font-size:8.5px;color:#b4b4b4">0</div>
<div class="t" style="left:63px;top:306.1px;font-size:8.5px;color:#b4b4b4">4</div>
<div class="t" style="left:63px;top:313.6px;font-size:8.5px;color:#b4b4b4">0</div>
<div class="t" style="left:63px;top:321.1px;font-size:8.5px;color:#b4b4b4">0</div>
<div class="t" style="left:63px;top:359.3px;font-size:8.5px;color:#b4b4b4">5</div>
<div class="t" style="left:63px;top:366.8px;font-size:8.5px;color:#b4b4b4">0</div>
<div class="t" style="left:63px;top:374.3px;font-size:8.5px;color:#b4b4b4">0</div>
<div class="t" style="left:63px;top:412.5px;font-size:8.5px;color:#b4b4b4">6</div>
<div class="t" style="left:63px;top:420.0px;font-size:8.5px;color:#b4b4b4">0</div>
<div class="t" style="left:63px;top:427.5px;font-size:8.5px;color:#b4b4b4">0</div>
<div class="t" style="left:63px;top:465.7px;font-size:8.5px;color:#b4b4b4">7</div>
<div class="t" style="left:63px;top:473.2px;font-size:8.5px;color:#b4b4b4">0</div>
<div class="t" style="left:63px;top:480.7px;font-size:8.5px;color:#b4b4b4">0</div>
<div class="t" style="left:63px;top:518.9px;font-size:8.5px;color:#b4b4b4">8</div>
<div class="t" style="left:63px;top:526.4px;font-size:8.5px;color:#b4b4b4">0</div>
<div class="t" style="left:63px;top:533.9px;font-size:8.5px;color:#b4b4b4">0</div>
<!-- TOOLBAR -->
<div class="a" style="left:0;top:62px;width:1px;height:624px;background:#454545"></div>
<div class="a" style="left:22px;top:66px;width:14px;height:1px;border-top:1px dotted #6c6c6c"></div>
<svg class="a" style="left:4px;top:55px" width="7" height="5" viewBox="0 0 7 5"><path d="M2.5 0.5V4.5L0 2.5ZM6 0.5V4.5L3.5 2.5Z" fill="#a0a0a0"/></svg>
<div class="a" style="left:4px;top:99px;width:24px;height:19px;background:#3b3b3b"></div>
<svg class="a" style="left:6px;top:77px" width="20" height="20" viewBox="0 0 20 20"><path d="M10 4V16M4 10H16" stroke="#e2e2e2" stroke-width="1.4"/><path d="M10 2.5L7.3 5.6H12.7ZM10 17.5L7.3 14.4H12.7ZM2.5 10L5.6 7.3V12.7ZM17.5 10L14.4 7.3V12.7Z" fill="#e2e2e2"/></svg>
<svg class="a" style="left:24px;top:93px" width="3" height="3" viewBox="0 0 3 3"><path d="M3 0V3H0Z" fill="#bdbdbd"/></svg>
<svg class="a" style="left:34px;top:77px" width="20" height="20" viewBox="0 0 20 20"><rect x="3.7" y="4.2" width="12.6" height="11.6" rx="1.5" fill="none" stroke="#e2e2e2" stroke-width="1.4" stroke-dasharray="3.2 1.6"/></svg>
<svg class="a" style="left:52px;top:93px" width="3" height="3" viewBox="0 0 3 3"><path d="M3 0V3H0Z" fill="#bdbdbd"/></svg>
<svg class="a" style="left:6px;top:99px" width="20" height="20" viewBox="0 0 20 20"><ellipse cx="10.5" cy="8.5" rx="6.3" ry="4.5" fill="none" stroke="#e2e2e2" stroke-width="1.3"/><path d="M5.5 11.8C4 12.4 4.3 14.3 6 14.6C7 14.9 6.6 16 5.6 16.6" fill="none" stroke="#e2e2e2" stroke-width="1.2"/></svg>
<svg class="a" style="left:24px;top:115px" width="3" height="3" viewBox="0 0 3 3"><path d="M3 0V3H0Z" fill="#bdbdbd"/></svg>
<svg class="a" style="left:34px;top:99px" width="20" height="20" viewBox="0 0 20 20"><path d="M4.5 16.5L13.5 7.5" stroke="#e2e2e2" stroke-width="3.2" stroke-linecap="round"/><path d="M11.5 9.5L13.5 7.5" stroke="#535353" stroke-width="0.8"/><path d="M7 3.5L7.6 5L9 5.5L7.6 6L7 7.5L6.4 6L5 5.5L6.4 5ZM15.5 3L16 4.3L17.3 4.8L16 5.3L15.5 6.6L15 5.3L13.7 4.8L15 4.3ZM16.5 11L16.9 12L17.9 12.4L16.9 12.8L16.5 13.8L16.1 12.8L15.1 12.4L16.1 12Z" fill="#e2e2e2"/></svg>
<svg class="a" style="left:52px;top:115px" width="3" height="3" viewBox="0 0 3 3"><path d="M3 0V3H0Z" fill="#bdbdbd"/></svg>
<svg class="a" style="left:6px;top:120px" width="20" height="20" viewBox="0 0 20 20"><path d="M6.5 3V13.5H17M3 6.5H13.5V17" fill="none" stroke="#e2e2e2" stroke-width="1.5"/></svg>
<svg class="a" style="left:24px;top:136px" width="3" height="3" viewBox="0 0 3 3"><path d="M3 0V3H0Z" fill="#bdbdbd"/></svg>
<svg class="a" style="left:34px;top:120px" width="20" height="20" viewBox="0 0 20 20"><rect x="3.8" y="4.3" width="12.4" height="11.4" fill="none" stroke="#e2e2e2" stroke-width="1.4"/><path d="M3.8 4.3L16.2 15.7M16.2 4.3L3.8 15.7" stroke="#e2e2e2" stroke-width="1.1"/><path d="M2.5 3H5M15 3H17.5M2.5 17H5M15 17H17.5" stroke="#e2e2e2" stroke-width="1"/></svg>
<svg class="a" style="left:52px;top:136px" width="3" height="3" viewBox="0 0 3 3"><path d="M3 0V3H0Z" fill="#bdbdbd"/></svg>
<svg class="a" style="left:6px;top:142px" width="20" height="20" viewBox="0 0 20 20"><path d="M4.5 16.5L5 14L11 8L13 10L7 16Z" fill="none" stroke="#e2e2e2" stroke-width="1.3" stroke-linejoin="round"/><path d="M10 7L14 11M12.5 6.5L15.5 3.8Q17 3.2 16.8 4.8L14 7.8" fill="#e2e2e2" stroke="#e2e2e2" stroke-width="2"/></svg>
<svg class="a" style="left:24px;top:158px" width="3" height="3" viewBox="0 0 3 3"><path d="M3 0V3H0Z" fill="#bdbdbd"/></svg>
<svg class="a" style="left:34px;top:142px" width="20" height="20" viewBox="0 0 20 20"><rect x="5" y="5" width="10" height="10" rx="2" fill="#6a6a6a" stroke="#e2e2e2" stroke-width="1.3"/><path d="M7 3V5M10 3V5M13 3V5M7 15V17M10 15V17M13 15V17M3 7H5M3 10H5M3 13H5M15 7H17M15 10H17M15 13H17" stroke="#e2e2e2" stroke-width="1"/></svg>
<svg class="a" style="left:52px;top:158px" width="3" height="3" viewBox="0 0 3 3"><path d="M3 0V3H0Z" fill="#bdbdbd"/></svg>
<svg class="a" style="left:6px;top:163px" width="20" height="20" viewBox="0 0 20 20"><path d="M15.5 3.5L9.5 10.5" stroke="#e2e2e2" stroke-width="1.8" stroke-linecap="round"/><path d="M9.3 10.3C7 10 5.5 12 5.5 14C5.5 15.5 4.5 16.5 3.5 16.8C6 17.5 10.5 16 10.8 12.5Z" fill="#e2e2e2"/></svg>
<svg class="a" style="left:24px;top:179px" width="3" height="3" viewBox="0 0 3 3"><path d="M3 0V3H0Z" fill="#bdbdbd"/></svg>
<svg class="a" style="left:34px;top:163px" width="20" height="20" viewBox="0 0 20 20"><circle cx="10" cy="5.5" r="2.6" fill="#e2e2e2"/><path d="M9 7.5H11V10H9Z" fill="#e2e2e2"/><path d="M4.5 10H15.5V13H4.5Z" fill="#e2e2e2"/><path d="M4 15.5H16" stroke="#e2e2e2" stroke-width="1.2"/></svg>
<svg class="a" style="left:52px;top:179px" width="3" height="3" viewBox="0 0 3 3"><path d="M3 0V3H0Z" fill="#bdbdbd"/></svg>
<svg class="a" style="left:6px;top:185px" width="20" height="20" viewBox="0 0 20 20"><path d="M15.5 3.5L10 10.5" stroke="#e2e2e2" stroke-width="1.7" stroke-linecap="round"/><path d="M9.8 10.3C7.5 10 6 12 6 14C6 15.5 5 16.5 4 16.8C6.5 17.5 11 16 11.3 12.5Z" fill="#e2e2e2"/><path d="M10.5 6.5C8 4.5 5.5 5 4.3 6.8" fill="none" stroke="#e2e2e2" stroke-width="1.1"/><path d="M2.8 6L5.5 5.5L4.8 8.3Z" fill="#e2e2e2"/></svg>
<svg class="a" style="left:24px;top:201px" width="3" height="3" viewBox="0 0 3 3"><path d="M3 0V3H0Z" fill="#bdbdbd"/></svg>
<svg class="a" style="left:34px;top:185px" width="20" height="20" viewBox="0 0 20 20"><path d="M11.5 3.5L16.5 8.5L10.5 14.5H6.5L3.5 11.5Z" fill="none" stroke="#e2e2e2" stroke-width="1.3" stroke-linejoin="round"/><path d="M11.5 3.5L16.5 8.5L12 13L7 8Z" fill="#e2e2e2"/><path d="M9 14.8H16.5" stroke="#e2e2e2" stroke-width="1.1"/></svg>
<svg class="a" style="left:52px;top:201px" width="3" height="3" viewBox="0 0 3 3"><path d="M3 0V3H0Z" fill="#bdbdbd"/></svg>
<svg class="a" style="left:6px;top:206px" width="20" height="20" viewBox="0 0 20 20"><defs><linearGradient id="gr" x1="0" y1="0" x2="1" y2="0"><stop offset="0" stop-color="#222"/><stop offset="1" stop-color="#ddd"/></linearGradient></defs><rect x="3.5" y="4.5" width="13" height="11" fill="url(#gr)" stroke="#e2e2e2" stroke-width="1"/></svg>
<svg class="a" style="left:24px;top:222px" width="3" height="3" viewBox="0 0 3 3"><path d="M3 0V3H0Z" fill="#bdbdbd"/></svg>
<svg class="a" style="left:34px;top:206px" width="20" height="20" viewBox="0 0 20 20"><path d="M6 15.5L10.5 10" stroke="#e2e2e2" stroke-width="2" stroke-linecap="round"/><path d="M7.5 11C6 9 6 5 9.5 4C13 3 16.5 5 16 9C15.6 12 13 13.5 10.5 12.5" fill="#e2e2e2"/><path d="M9 10.5L12 7.5" stroke="#535353" stroke-width="1"/></svg>
<svg class="a" style="left:52px;top:222px" width="3" height="3" viewBox="0 0 3 3"><path d="M3 0V3H0Z" fill="#bdbdbd"/></svg>
<svg class="a" style="left:6px;top:228px" width="20" height="20" viewBox="0 0 20 20"><circle cx="11.5" cy="7.5" r="4.6" fill="#e2e2e2"/><path d="M8.5 10.5L3.5 15.5" stroke="#e2e2e2" stroke-width="1.5" stroke-linecap="round"/></svg>
<svg class="a" style="left:24px;top:244px" width="3" height="3" viewBox="0 0 3 3"><path d="M3 0V3H0Z" fill="#bdbdbd"/></svg>
<svg class="a" style="left:34px;top:228px" width="20" height="20" viewBox="0 0 20 20"><path d="M4 16L5.5 9.5L11.5 5L15 8.5L10.5 14.5Z" fill="none" stroke="#e2e2e2" stroke-width="1.3" stroke-linejoin="round"/><path d="M11.5 5L13.5 3L17 6.5L15 8.5" fill="none" stroke="#e2e2e2" stroke-width="1.3"/><path d="M4 16L8.5 11.5" stroke="#e2e2e2" stroke-width="1"/><circle cx="9" cy="11" r="1" fill="#e2e2e2"/></svg>
<svg class="a" style="left:52px;top:244px" width="3" height="3" viewBox="0 0 3 3"><path d="M3 0V3H0Z" fill="#bdbdbd"/></svg>
<svg class="a" style="left:6px;top:250px" width="20" height="20" viewBox="0 0 20 20"><path d="M4 4.5H16V7.5H15.2L14.6 5.8H11.1V14.5L12.8 15V15.8H7.2V15L8.9 14.5V5.8H5.4L4.8 7.5H4Z" fill="#e2e2e2"/></svg>
<svg class="a" style="left:24px;top:266px" width="3" height="3" viewBox="0 0 3 3"><path d="M3 0V3H0Z" fill="#bdbdbd"/></svg>
<svg class="a" style="left:34px;top:250px" width="20" height="20" viewBox="0 0 20 20"><path d="M5.5 3V15L8.5 12L11 17L13 16L10.5 11H14.5Z" fill="#e2e2e2"/></svg>
<svg class="a" style="left:52px;top:266px" width="3" height="3" viewBox="0 0 3 3"><path d="M3 0V3H0Z" fill="#bdbdbd"/></svg>
<svg class="a" style="left:6px;top:272px" width="20" height="20" viewBox="0 0 20 20"><rect x="3.5" y="4.5" width="13" height="11" rx="3.2" fill="#6f6f6f" stroke="#e2e2e2" stroke-width="1.3"/></svg>
<svg class="a" style="left:24px;top:288px" width="3" height="3" viewBox="0 0 3 3"><path d="M3 0V3H0Z" fill="#bdbdbd"/></svg>
<svg class="a" style="left:34px;top:272px" width="20" height="20" viewBox="0 0 20 20"><path d="M6.5 17C4.5 15 3 13 2.8 11.5C2.6 10.5 3.8 10.2 4.5 11L6 12.5V5.5C6 4.5 7.6 4.5 7.6 5.5V9.5V3.8C7.6 2.8 9.3 2.8 9.3 3.8V9.5V3.3C9.3 2.3 11 2.3 11 3.3V9.5V4.3C11 3.3 12.6 3.3 12.6 4.3V9.5V6.3C12.6 5.3 14.2 5.3 14.2 6.3V13C14.2 15 13 17 12 17Z" fill="#e2e2e2"/></svg>
<svg class="a" style="left:52px;top:288px" width="3" height="3" viewBox="0 0 3 3"><path d="M3 0V3H0Z" fill="#bdbdbd"/></svg>
<svg class="a" style="left:6px;top:293px" width="20" height="20" viewBox="0 0 20 20"><circle cx="8.5" cy="8.5" r="5" fill="none" stroke="#e2e2e2" stroke-width="1.4"/><path d="M12 12L16.5 16.5" stroke="#e2e2e2" stroke-width="1.8" stroke-linecap="round"/><path d="M6 7Q7 5.5 9 5.8" fill="none" stroke="#e2e2e2" stroke-width="0.8"/></svg>
<svg class="a" style="left:24px;top:309px" width="3" height="3" viewBox="0 0 3 3"><path d="M3 0V3H0Z" fill="#bdbdbd"/></svg>
<svg class="a" style="left:34px;top:293px" width="20" height="20" viewBox="0 0 20 20"><circle cx="4.5" cy="10" r="1.6" fill="#e2e2e2"/><circle cx="10" cy="10" r="1.6" fill="#e2e2e2"/><circle cx="15.5" cy="10" r="1.6" fill="#e2e2e2"/></svg>
<svg class="a" style="left:52px;top:309px" width="3" height="3" viewBox="0 0 3 3"><path d="M3 0V3H0Z" fill="#bdbdbd"/></svg>
<div class="a" style="left:27px;top:334px;width:20px;height:20px;background:#000;border:1px solid #d8d8d8"></div>
<div class="a" style="left:15px;top:321px;width:20px;height:20px;background:#d3a92b;border:1px solid #d8d8d8"></div>
<svg class="a" style="left:40px;top:320px" width="10" height="10" viewBox="0 0 10 10"><path d="M2 2.5H6.5Q8 2.5 8 4V7.5" fill="none" stroke="#e2e2e2" stroke-width="1.1"/><path d="M1 2.5L3 0.8V4.2ZM8 9L6.3 7H9.7Z" fill="#e2e2e2"/></svg>
<div class="a" style="left:17px;top:351px;width:6px;height:5px;background:#eee"></div>
<div class="a" style="left:14px;top:348px;width:6px;height:5px;background:#111;border:1px solid #ddd"></div>
<svg class="a" style="left:8px;top:365px" width="16" height="13" viewBox="0 0 16 13"><rect x="1" y="1" width="14" height="11" fill="none" stroke="#e2e2e2" stroke-width="1.2"/><circle cx="8" cy="6.5" r="3.2" fill="none" stroke="#e2e2e2" stroke-width="1" stroke-dasharray="1.2 1"/></svg>
<svg class="a" style="left:36px;top:365px" width="17" height="13" viewBox="0 0 17 13"><rect x="6" y="1" width="10" height="7" fill="none" stroke="#e2e2e2" stroke-width="1.2"/><rect x="1" y="4.5" width="10" height="7.5" fill="#535353" stroke="#e2e2e2" stroke-width="1.2"/></svg>
<svg class="a" style="left:52px;top:375px" width="3" height="3" viewBox="0 0 3 3"><path d="M3 0V3H0Z" fill="#bdbdbd"/></svg>
<!-- STATUS -->
<div class="a" style="left:61px;top:564px;width:40px;height:14px;background:#494949"></div>
<div class="a" style="left:101px;top:564px;width:153px;height:14px;background:#535353"></div>
<div class="a" style="left:254px;top:564px;width:1px;height:14px;background:#3e3e3e"></div>
<div class="t" style="left:66px;top:566.5px;font-size:9px;color:#dcdcdc;letter-spacing:-0.2px">79,89%</div>
<div class="t" style="left:133px;top:567px;font-size:8.5px;color:#d0d0d0;letter-spacing:-0.3px">Dok: 2,86 MB/52,0 MB</div>
<svg class="a" style="left:245px;top:566px" width="5" height="9" viewBox="0 0 5 9"><path d="M0.8 0.5L4 4.5L0.8 8.5" fill="none" stroke="#cfcfcf" stroke-width="1"/></svg>
<svg class="a" style="left:261px;top:567px" width="4" height="7" viewBox="0 0 4 7"><path d="M3.5 0.5L0.8 3.5L3.5 6.5" fill="none" stroke="#8a8a8a" stroke-width="1"/></svg>
<svg class="a" style="left:910px;top:567px" width="4" height="7" viewBox="0 0 4 7"><path d="M0.5 0.5L3.2 3.5L0.5 6.5" fill="none" stroke="#8a8a8a" stroke-width="1"/></svg>
<svg class="a" style="left:924px;top:82px" width="8" height="5" viewBox="0 0 8 5"><path d="M0.5 4.5L4 1L7.5 4.5" fill="none" stroke="#9a9a9a" stroke-width="1"/></svg>
<svg class="a" style="left:924px;top:554px" width="8" height="5" viewBox="0 0 8 5"><path d="M0.5 0.5L4 4L7.5 0.5" fill="none" stroke="#9a9a9a" stroke-width="1"/></svg>
<!-- TIMELINE -->
<div class="t" style="left:69px;top:589px;font-size:8.5px;font-weight:700;color:#ececec;letter-spacing:-0.45px">Oś czasu</div>
<svg class="a" style="left:921px;top:588px" width="8" height="7" viewBox="0 0 8 7"><rect x="0" y="0" width="8" height="1.2" fill="#bdbdbd"/><rect x="0" y="2.5" width="8" height="1.2" fill="#bdbdbd"/><rect x="0" y="5" width="8" height="1.2" fill="#bdbdbd"/></svg>
<div class="a" style="left:61.3px;top:604px;width:44.5px;height:57px;background:#5f5f5f"></div>
<div class="a" style="left:107.1px;top:604px;width:44.5px;height:57px;background:#4f4f4f"></div>
<div class="a" style="left:153.0px;top:604px;width:44.5px;height:57px;background:#4f4f4f"></div>
<div class="a" style="left:198.8px;top:604px;width:44.5px;height:57px;background:#4f4f4f"></div>
<div class="a" style="left:244.7px;top:604px;width:44.5px;height:57px;background:#4f4f4f"></div>
<div class="a" style="left:290.5px;top:604px;width:44.5px;height:57px;background:#4f4f4f"></div>
<div class="a" style="left:336.3px;top:604px;width:44.5px;height:57px;background:#4f4f4f"></div>
<div class="a" style="left:382.2px;top:604px;width:44.5px;height:57px;background:#4f4f4f"></div>
<div class="a" style="left:428.0px;top:604px;width:44.5px;height:57px;background:#4f4f4f"></div>
<div class="a" style="left:473.9px;top:604px;width:44.5px;height:57px;background:#4f4f4f"></div>
<div class="a" style="left:519.7px;top:604px;width:44.5px;height:57px;background:#4f4f4f"></div>
<div class="a" style="left:565.5px;top:604px;width:44.5px;height:57px;background:#4f4f4f"></div>
<div class="a" style="left:63px;top:607px;width:41px;height:41px;border:1px solid #d8d0c0"></div>
<div class="a" style="left:65.6px;top:610.5px;width:35.5px;height:34.5px;background:#16bef0"></div>
<svg class="a" style="left:65.6px;top:610.5px" width="36" height="35" viewBox="0 0 36 35"><use href="#spin" transform="translate(17.8 17.2) scale(0.068) rotate(3)"/></svg>
<div class="a" style="left:65.6px;top:609.5px;width:11px;height:9.5px;background:#4a4a4a"></div>
<div class="t" style="left:67.1px;top:610px;font-size:9px;color:#e8e8e8;letter-spacing:-0.3px">1</div>
<div class="t" style="left:83.6px;top:651px;font-size:8.5px;color:#e0e0e0;letter-spacing:-0.2px">0,1</div>
<svg class="a" style="left:95.6px;top:653px" width="6" height="4" viewBox="0 0 6 4"><path d="M0.5 0.5L3 3.3L5.5 0.5" fill="none" stroke="#cfcfcf" stroke-width="0.9"/></svg>
<div class="a" style="left:111.4px;top:610.5px;width:35.5px;height:34.5px;background:#16bef0"></div>
<svg class="a" style="left:111.4px;top:610.5px" width="36" height="35" viewBox="0 0 36 35"><use href="#spin" transform="translate(17.8 17.2) scale(0.068) rotate(23)"/></svg>
<div class="a" style="left:111.4px;top:609.5px;width:11px;height:9.5px;background:#4a4a4a"></div>
<div class="t" style="left:112.9px;top:610px;font-size:9px;color:#e8e8e8;letter-spacing:-0.3px">2</div>
<div class="t" style="left:129.4px;top:651px;font-size:8.5px;color:#e0e0e0;letter-spacing:-0.2px">0,1</div>
<svg class="a" style="left:141.4px;top:653px" width="6" height="4" viewBox="0 0 6 4"><path d="M0.5 0.5L3 3.3L5.5 0.5" fill="none" stroke="#cfcfcf" stroke-width="0.9"/></svg>
<div class="a" style="left:157.3px;top:610.5px;width:35.5px;height:34.5px;background:#16bef0"></div>
<svg class="a" style="left:157.3px;top:610.5px" width="36" height="35" viewBox="0 0 36 35"><use href="#spin" transform="translate(17.8 17.2) scale(0.068) rotate(-30)"/></svg>
<div class="a" style="left:157.3px;top:609.5px;width:11px;height:9.5px;background:#4a4a4a"></div>
<div class="t" style="left:158.8px;top:610px;font-size:9px;color:#e8e8e8;letter-spacing:-0.3px">3</div>
<div class="t" style="left:175.3px;top:651px;font-size:8.5px;color:#e0e0e0;letter-spacing:-0.2px">0,1</div>
<svg class="a" style="left:187.3px;top:653px" width="6" height="4" viewBox="0 0 6 4"><path d="M0.5 0.5L3 3.3L5.5 0.5" fill="none" stroke="#cfcfcf" stroke-width="0.9"/></svg>
<div class="a" style="left:203.1px;top:610.5px;width:35.5px;height:34.5px;background:#16bef0"></div>
<svg class="a" style="left:203.1px;top:610.5px" width="36" height="35" viewBox="0 0 36 35"><use href="#spin" transform="translate(17.8 17.2) scale(0.068) rotate(3)"/></svg>
<div class="a" style="left:203.1px;top:609.5px;width:11px;height:9.5px;background:#4a4a4a"></div>
<div class="t" style="left:204.6px;top:610px;font-size:9px;color:#e8e8e8;letter-spacing:-0.3px">4</div>
<div class="t" style="left:221.1px;top:651px;font-size:8.5px;color:#e0e0e0;letter-spacing:-0.2px">0,1</div>
<svg class="a" style="left:233.1px;top:653px" width="6" height="4" viewBox="0 0 6 4"><path d="M0.5 0.5L3 3.3L5.5 0.5" fill="none" stroke="#cfcfcf" stroke-width="0.9"/></svg>
<div class="a" style="left:249.0px;top:610.5px;width:35.5px;height:34.5px;background:#16bef0"></div>
<svg class="a" style="left:249.0px;top:610.5px" width="36" height="35" viewBox="0 0 36 35"><use href="#spin" transform="translate(17.8 17.2) scale(0.068) rotate(23)"/></svg>
<div class="a" style="left:249.0px;top:609.5px;width:11px;height:9.5px;background:#4a4a4a"></div>
<div class="t" style="left:250.5px;top:610px;font-size:9px;color:#e8e8e8;letter-spacing:-0.3px">5</div>
<div class="t" style="left:267.0px;top:651px;font-size:8.5px;color:#e0e0e0;letter-spacing:-0.2px">0,1</div>
<svg class="a" style="left:279.0px;top:653px" width="6" height="4" viewBox="0 0 6 4"><path d="M0.5 0.5L3 3.3L5.5 0.5" fill="none" stroke="#cfcfcf" stroke-width="0.9"/></svg>
<div class="a" style="left:294.8px;top:610.5px;width:35.5px;height:34.5px;background:#16bef0"></div>
<svg class="a" style="left:294.8px;top:610.5px" width="36" height="35" viewBox="0 0 36 35"><use href="#spin" transform="translate(17.8 17.2) scale(0.068) rotate(53)"/></svg>
<div class="a" style="left:294.8px;top:609.5px;width:11px;height:9.5px;background:#4a4a4a"></div>
<div class="t" style="left:296.3px;top:610px;font-size:9px;color:#e8e8e8;letter-spacing:-0.3px">6</div>
<div class="t" style="left:312.8px;top:651px;font-size:8.5px;color:#e0e0e0;letter-spacing:-0.2px">0,1</div>
<svg class="a" style="left:324.8px;top:653px" width="6" height="4" viewBox="0 0 6 4"><path d="M0.5 0.5L3 3.3L5.5 0.5" fill="none" stroke="#cfcfcf" stroke-width="0.9"/></svg>
<div class="a" style="left:340.6px;top:610.5px;width:35.5px;height:34.5px;background:#16bef0"></div>
<svg class="a" style="left:340.6px;top:610.5px" width="36" height="35" viewBox="0 0 36 35"><use href="#spin" transform="translate(17.8 17.2) scale(0.068) rotate(-25)"/></svg>
<div class="a" style="left:340.6px;top:609.5px;width:11px;height:9.5px;background:#4a4a4a"></div>
<div class="t" style="left:342.1px;top:610px;font-size:9px;color:#e8e8e8;letter-spacing:-0.3px">7</div>
<div class="t" style="left:358.6px;top:651px;font-size:8.5px;color:#e0e0e0;letter-spacing:-0.2px">0,1</div>
<svg class="a" style="left:370.6px;top:653px" width="6" height="4" viewBox="0 0 6 4"><path d="M0.5 0.5L3 3.3L5.5 0.5" fill="none" stroke="#cfcfcf" stroke-width="0.9"/></svg>
<div class="a" style="left:386.5px;top:610.5px;width:35.5px;height:34.5px;background:#16bef0"></div>
<svg class="a" style="left:386.5px;top:610.5px" width="36" height="35" viewBox="0 0 36 35"><use href="#spin" transform="translate(17.8 17.2) scale(0.068) rotate(3)"/></svg>
<div class="a" style="left:386.5px;top:609.5px;width:11px;height:9.5px;background:#4a4a4a"></div>
<div class="t" style="left:388.0px;top:610px;font-size:9px;color:#e8e8e8;letter-spacing:-0.3px">8</div>
<div class="t" style="left:404.5px;top:651px;font-size:8.5px;color:#e0e0e0;letter-spacing:-0.2px">0,1</div>
<svg class="a" style="left:416.5px;top:653px" width="6" height="4" viewBox="0 0 6 4"><path d="M0.5 0.5L3 3.3L5.5 0.5" fill="none" stroke="#cfcfcf" stroke-width="0.9"/></svg>
<div class="a" style="left:432.3px;top:610.5px;width:35.5px;height:34.5px;background:#16bef0"></div>
<svg class="a" style="left:432.3px;top:610.5px" width="36" height="35" viewBox="0 0 36 35"><use href="#spin" transform="translate(17.8 17.2) scale(0.068) rotate(23)"/></svg>
<div class="a" style="left:432.3px;top:609.5px;width:11px;height:9.5px;background:#4a4a4a"></div>
<div class="t" style="left:433.8px;top:610px;font-size:9px;color:#e8e8e8;letter-spacing:-0.3px">9</div>
<div class="t" style="left:450.3px;top:651px;font-size:8.5px;color:#e0e0e0;letter-spacing:-0.2px">0,1</div>
<svg class="a" style="left:462.3px;top:653px" width="6" height="4" viewBox="0 0 6 4"><path d="M0.5 0.5L3 3.3L5.5 0.5" fill="none" stroke="#cfcfcf" stroke-width="0.9"/></svg>
<div class="a" style="left:478.2px;top:610.5px;width:35.5px;height:34.5px;background:#16bef0"></div>
<svg class="a" style="left:478.2px;top:610.5px" width="36" height="35" viewBox="0 0 36 35"><use href="#spin" transform="translate(17.8 17.2) scale(0.068) rotate(53)"/></svg>
<div class="a" style="left:478.2px;top:609.5px;width:16px;height:9.5px;background:#4a4a4a"></div>
<div class="t" style="left:479.7px;top:610px;font-size:9px;color:#e8e8e8;letter-spacing:-0.3px">10</div>
<div class="t" style="left:496.2px;top:651px;font-size:8.5px;color:#e0e0e0;letter-spacing:-0.2px">0,1</div>
<svg class="a" style="left:508.2px;top:653px" width="6" height="4" viewBox="0 0 6 4"><path d="M0.5 0.5L3 3.3L5.5 0.5" fill="none" stroke="#cfcfcf" stroke-width="0.9"/></svg>
<div class="a" style="left:524.0px;top:610.5px;width:35.5px;height:34.5px;background:#16bef0"></div>
<svg class="a" style="left:524.0px;top:610.5px" width="36" height="35" viewBox="0 0 36 35"><use href="#spin" transform="translate(17.8 17.2) scale(0.068) rotate(-27)"/></svg>
<div class="a" style="left:524.0px;top:609.5px;width:16px;height:9.5px;background:#4a4a4a"></div>
<div class="t" style="left:525.5px;top:610px;font-size:9px;color:#e8e8e8;letter-spacing:-0.3px">11</div>
<div class="t" style="left:542.0px;top:651px;font-size:8.5px;color:#e0e0e0;letter-spacing:-0.2px">0,1</div>
<svg class="a" style="left:554.0px;top:653px" width="6" height="4" viewBox="0 0 6 4"><path d="M0.5 0.5L3 3.3L5.5 0.5" fill="none" stroke="#cfcfcf" stroke-width="0.9"/></svg>
<div class="a" style="left:569.8px;top:610.5px;width:35.5px;height:34.5px;background:#16bef0"></div>
<svg class="a" style="left:569.8px;top:610.5px" width="36" height="35" viewBox="0 0 36 35"><use href="#spin" transform="translate(17.8 17.2) scale(0.068) rotate(3)"/></svg>
<div class="a" style="left:569.8px;top:609.5px;width:16px;height:9.5px;background:#4a4a4a"></div>
<div class="t" style="left:571.3px;top:610px;font-size:9px;color:#e8e8e8;letter-spacing:-0.3px">12</div>
<div class="t" style="left:587.8px;top:651px;font-size:8.5px;color:#e0e0e0;letter-spacing:-0.2px">0,1</div>
<svg class="a" style="left:599.8px;top:653px" width="6" height="4" viewBox="0 0 6 4"><path d="M0.5 0.5L3 3.3L5.5 0.5" fill="none" stroke="#cfcfcf" stroke-width="0.9"/></svg>
<div class="a" style="left:61px;top:661px;width:257px;height:23px;background:#4c4c4c"></div>

<div class="a" style="left:0;top:684px;width:1280px;height:2px;background:#3a3a3a"></div>
<svg class="a" style="left:68px;top:667px" width="13" height="11" viewBox="0 0 13 11"><path d="M0 1H3M0 4H3M0 7H3M0 10H3M5 1H13M5 4H11M5 7H13M5 10H12M4 0V11" stroke="#dedede" stroke-width="1.3"/></svg>
<div class="t" style="left:89px;top:669.5px;font-size:9px;color:#d8d8d8;letter-spacing:-0.55px">Na zawsze</div>
<svg class="a" style="left:137px;top:671px" width="7" height="6" viewBox="0 0 7 6"><path d="M0 0.5H7L3.5 5.5Z" fill="#dedede"/></svg>
<svg class="a" style="left:154px;top:669px" width="10" height="9" viewBox="0 0 10 9"><rect x="0" y="1" width="1.6" height="7" fill="#9a9a9a"/><path d="M10 0.5V8.5L3 4.5Z" fill="#9a9a9a"/></svg>
<svg class="a" style="left:178px;top:669px" width="10" height="9" viewBox="0 0 10 9"><path d="M7 0.5V8.5L0 4.5Z" fill="#dedede"/><rect x="8" y="1" width="1.8" height="7" fill="#dedede"/></svg>
<svg class="a" style="left:204px;top:669px" width="9" height="9" viewBox="0 0 9 9"><path d="M0.5 0V9L8.5 4.5Z" fill="#dedede"/></svg>
<svg class="a" style="left:228px;top:669px" width="10" height="9" viewBox="0 0 10 9"><rect x="0" y="1" width="1.8" height="7" fill="#dedede"/><path d="M3 0.5V8.5L10 4.5Z" fill="#dedede"/></svg>
<svg class="a" style="left:251px;top:668px" width="12" height="11" viewBox="0 0 12 11"><path d="M1 1L8 8" stroke="#dedede" stroke-width="1.4"/><path d="M6 6L11 10" stroke="#dedede" stroke-width="3" stroke-linecap="round"/></svg>
<svg class="a" style="left:275px;top:668px" width="11" height="11" viewBox="0 0 11 11"><path d="M0.7 2.5H9.5V7L6.5 10.3H2.5V4" fill="none" stroke="#dedede" stroke-width="1.3"/><path d="M6.5 10.3V7H9.5" fill="none" stroke="#dedede" stroke-width="1.1"/><path d="M3 0V3" stroke="#dedede" stroke-width="1"/></svg>
<svg class="a" style="left:300px;top:667px" width="10" height="12" viewBox="0 0 10 12"><path d="M0 2.3H10M3.5 2.3V0.7H6.5V2.3" fill="none" stroke="#dedede" stroke-width="1.2"/><path d="M1.3 3.5H8.7V11.3H1.3Z" fill="none" stroke="#dedede" stroke-width="1.2"/><path d="M3.8 5V10M6.2 5V10" stroke="#dedede" stroke-width="1"/></svg>
<!-- ICON STRIP -->
<svg class="a" style="left:957px;top:55px" width="7" height="5" viewBox="0 0 7 5"><path d="M2.5 0.5V4.5L0 2.5ZM6 0.5V4.5L3.5 2.5Z" fill="#a0a0a0"/></svg>
<div class="a" style="left:936px;top:118px;width:31px;height:1px;background:#404040"></div>
<div class="a" style="left:936px;top:177px;width:31px;height:1px;background:#404040"></div>
<div class="a" style="left:936px;top:211px;width:31px;height:1px;background:#404040"></div>
<div class="a" style="left:936px;top:246px;width:31px;height:1px;background:#404040"></div>
<div class="a" style="left:936px;top:279px;width:31px;height:1px;background:#404040"></div>
<div class="a" style="left:945px;top:66px;width:14px;height:1px;border-top:1px dotted #6a6a6a"></div>
<div class="a" style="left:945px;top:123px;width:14px;height:1px;border-top:1px dotted #6a6a6a"></div>
<div class="a" style="left:945px;top:181px;width:14px;height:1px;border-top:1px dotted #6a6a6a"></div>
<div class="a" style="left:945px;top:215px;width:14px;height:1px;border-top:1px dotted #6a6a6a"></div>
<div class="a" style="left:945px;top:250px;width:14px;height:1px;border-top:1px dotted #6a6a6a"></div>
<svg class="a" style="left:945px;top:74px" width="14" height="16" viewBox="0 0 14 16"><rect x="1" y="0.7" width="4.5" height="3.5" fill="none" stroke="#e0e0e0" stroke-width="1.1"/><rect x="1" y="5.7" width="4.5" height="3.5" fill="none" stroke="#e0e0e0" stroke-width="1.1"/><rect x="0.5" y="10.5" width="5.5" height="5" fill="#e0e0e0"/><path d="M8 3H11.5Q13 3 12.8 6.5Q12.5 11 8.5 14" fill="none" stroke="#e0e0e0" stroke-width="1.4"/><path d="M7 1L9.5 3L7 5Z" fill="#e0e0e0"/></svg>
<svg class="a" style="left:946px;top:99px" width="13" height="13" viewBox="0 0 13 13"><path d="M0.5 0.3V12.7L12.5 6.5Z" fill="#e0e0e0"/></svg>
<svg class="a" style="left:944px;top:131px" width="17" height="17" viewBox="0 0 17 17"><circle cx="8.5" cy="8.5" r="5" fill="none" stroke="#e0e0e0" stroke-width="1.2"/><circle cx="8.5" cy="8.5" r="2" fill="#e0e0e0"/><path d="M8.5 0.5V16.5M0.5 8.5H16.5M2.8 2.8L14.2 14.2M14.2 2.8L2.8 14.2" stroke="#e0e0e0" stroke-width="1.1"/></svg>
<svg class="a" style="left:944px;top:154px" width="17" height="14" viewBox="0 0 17 14"><path d="M0.5 13.5V9L2 8L3 10L4 6L5.5 9L6.5 4L8 7L9 2L10.5 8L11.5 5L12.5 9L14 3L15 8L16.5 9V13.5Z" fill="#e0e0e0"/></svg>
<svg class="a" style="left:947px;top:190px" width="11" height="15" viewBox="0 0 11 15"><path d="M5 1H10.5V2.5H9.5V14.5H8V2.5H7V14.5H5.5V9Q0.5 9 0.5 5Q0.5 1 5 1Z" fill="#e0e0e0"/></svg>
<svg class="a" style="left:945px;top:223px" width="16" height="17" viewBox="0 0 16 17"><path d="M8 1L14.5 4.5V12L8 16L1.5 12V4.5Z" fill="#6a6a6a" stroke="#e0e0e0" stroke-width="1.2" stroke-linejoin="round"/><path d="M1.5 4.5L8 8.2L14.5 4.5M8 8.2V16" fill="none" stroke="#e0e0e0" stroke-width="1.2"/><path d="M8 1L14.5 4.5L8 8.2L1.5 4.5Z" fill="#8a8a8a"/></svg>
<div class="t" style="left:945.5px;top:258px;font-size:14px;color:#e0e0e0">A</div>
<div class="a" style="left:956.5px;top:257px;width:1.2px;height:15px;background:#e0e0e0"></div>
<!-- KOLOR -->
<div class="a" style="left:969px;top:85px;width:308px;height:87px;background:#535353"></div>
<div class="a" style="left:1008px;top:62px;width:1px;height:23px;background:#3d3d3d"></div>
<div class="a" style="left:1048px;top:62px;width:1px;height:23px;background:#3d3d3d"></div>
<div class="a" style="left:1117px;top:62px;width:1px;height:23px;background:#3d3d3d"></div>
<div class="t" style="left:977px;top:70px;font-size:8px;font-weight:700;color:#f0f0f0">Kolor</div>
<div class="t" style="left:1015px;top:70px;font-size:8.5px;color:#bdbdbd;letter-spacing:-0.1px">Próbki</div>
<div class="t" style="left:1057.5px;top:70px;font-size:8.4px;color:#bdbdbd;letter-spacing:-0.15px">Dopasowania</div>
<svg class="a" style="left:1264px;top:70px" width="8" height="7" viewBox="0 0 8 7"><rect x="0" y="0" width="8" height="1.3" fill="#b5b5b5"/><rect x="0" y="2.7" width="8" height="1.3" fill="#b5b5b5"/><rect x="0" y="5.4" width="8" height="1.3" fill="#b5b5b5"/></svg>
<div class="a" style="left:986px;top:103px;width:15px;height:15px;background:#000;border:1px solid #d8d8d8"></div>
<div class="a" style="left:977px;top:94px;width:17px;height:17px;background:#d3a92b;border:1px solid #d8d8d8;box-shadow:0 0 0 1px #707070"></div>
<div class="a" style="left:1006px;top:91px;width:228px;height:63px;background:linear-gradient(to bottom,rgba(0,0,0,0),#000),linear-gradient(to right,#fff,#ffcc00)"></div>
<div class="a" style="left:1180px;top:104px;width:10px;height:10px;border:1px solid #222;border-radius:50%"></div>
<div class="a" style="left:1248px;top:91px;width:17px;height:63px;background:linear-gradient(to bottom,#ff0000 0%,#ff00ff 17%,#0000ff 33%,#00ffff 50%,#00ff00 67%,#ffff00 83%,#ff0000 100%)"></div>
<svg class="a" style="left:1241px;top:141px" width="6" height="8" viewBox="0 0 6 8"><path d="M0.5 0.5L5.5 4L0.5 7.5Z" fill="#f0f0f0"/></svg>
<!-- WLASCIWOSCI -->
<div class="a" style="left:969px;top:198px;width:308px;height:181px;background:#535353"></div>
<div class="a" style="left:1033px;top:175px;width:1px;height:23px;background:#3d3d3d"></div>
<div class="a" style="left:1134px;top:175px;width:1px;height:23px;background:#3d3d3d"></div>
<div class="a" style="left:1192px;top:175px;width:1px;height:23px;background:#3d3d3d"></div>
<div class="a" style="left:1225px;top:175px;width:1px;height:23px;background:#3d3d3d"></div>
<div class="t" style="left:977px;top:182.5px;font-size:8px;font-weight:700;color:#f0f0f0;letter-spacing:-0.2px">Właściwości</div>
<div class="t" style="left:1039.5px;top:182.5px;font-size:8.5px;color:#bdbdbd;letter-spacing:-0.1px">Materiały szkoleniowe</div>
<div class="t" style="left:1144px;top:182.5px;font-size:8.5px;color:#bdbdbd;letter-spacing:0px">Biblioteki</div>
<div class="t" style="left:1197px;top:182.5px;font-size:8.5px;color:#bdbdbd">Style</div>
<svg class="a" style="left:1264px;top:183px" width="8" height="7" viewBox="0 0 8 7"><rect x="0" y="0" width="8" height="1.3" fill="#b5b5b5"/><rect x="0" y="2.7" width="8" height="1.3" fill="#b5b5b5"/><rect x="0" y="5.4" width="8" height="1.3" fill="#b5b5b5"/></svg>
<div class="a" style="left:979px;top:204px;width:17px;height:17px;background:#3d3d3d"></div>
<svg class="a" style="left:981px;top:207px" width="13" height="11" viewBox="0 0 13 11"><rect x="0.6" y="0.6" width="11.8" height="9.8" fill="none" stroke="#dcdcdc" stroke-width="1.2"/><path d="M1.5 9.5L4.5 5.5L6.5 7.5L9 4L11.5 9.5Z" fill="#dcdcdc"/><circle cx="4" cy="3.3" r="1.1" fill="#dcdcdc"/></svg>
<div class="t" style="left:1002px;top:208.5px;font-size:8.5px;color:#dcdcdc;letter-spacing:-0.2px">Właściwości warstwy pikseli</div>
<div class="a" style="left:969px;top:226px;width:308px;height:1px;background:#464646"></div>
<div class="a" style="left:1262px;top:227px;width:15px;height:131px;background:#4f4f4f;border-radius:0 0 0 4px"></div>
<div class="t" style="left:978px;top:238.5px;font-size:8.5px;color:#cfcfcf">Sz:</div>
<div class="a" style="left:995px;top:237px;width:43px;height:12px;background:#454545"></div>
<div class="t" style="left:997.5px;top:238.5px;font-size:8.5px;color:#e8e8e8;letter-spacing:-0.1px">5,76 cal</div>
<div class="a" style="left:1046px;top:234px;width:19px;height:19px;background:#3d3d3d"></div>
<svg class="a" style="left:1050px;top:240px" width="11" height="7" viewBox="0 0 11 7"><rect x="0.6" y="0.6" width="5" height="5.8" rx="2.5" fill="none" stroke="#d8d8d8" stroke-width="1.1"/><rect x="5.4" y="0.6" width="5" height="5.8" rx="2.5" fill="none" stroke="#d8d8d8" stroke-width="1.1"/><path d="M3 3.5H8" stroke="#d8d8d8" stroke-width="1.1"/></svg>
<div class="t" style="left:1075px;top:238.5px;font-size:8.5px;color:#cfcfcf">W:</div>
<div class="a" style="left:1090px;top:237px;width:43px;height:12px;background:#454545"></div>
<div class="t" style="left:1094px;top:238.5px;font-size:8.5px;color:#e8e8e8;letter-spacing:-0.1px">5,53 cal</div>
<div class="t" style="left:981.5px;top:264px;font-size:8.5px;color:#cfcfcf">X:</div>
<div class="a" style="left:995px;top:262px;width:43px;height:13px;background:#454545"></div>
<div class="t" style="left:997.5px;top:264px;font-size:8.5px;color:#e8e8e8;letter-spacing:-0.2px">292 piks.</div>
<div class="t" style="left:1076px;top:264px;font-size:8.5px;color:#cfcfcf">Y:</div>
<div class="a" style="left:1088px;top:262px;width:44px;height:13px;background:#454545"></div>
<div class="t" style="left:1091.5px;top:264px;font-size:8.5px;color:#e8e8e8;letter-spacing:-0.2px">285 piks.</div>
<!-- WARSTWY -->
<div class="a" style="left:969px;top:405px;width:308px;height:279px;background:#535353"></div>
<div class="a" style="left:1019px;top:381px;width:1px;height:24px;background:#3d3d3d"></div>
<div class="a" style="left:1062px;top:381px;width:1px;height:24px;background:#3d3d3d"></div>
<div class="a" style="left:1106px;top:381px;width:1px;height:24px;background:#3d3d3d"></div>
<div class="t" style="left:977px;top:389px;font-size:8.4px;font-weight:700;color:#f0f0f0;letter-spacing:-0.1px">Warstwy</div>
<div class="t" style="left:1027.5px;top:389px;font-size:8.5px;color:#bdbdbd;letter-spacing:-0.2px">Kanały</div>
<div class="t" style="left:1070px;top:389px;font-size:8.5px;color:#bdbdbd;letter-spacing:-0.2px">Ścieżki</div>
<svg class="a" style="left:1264px;top:389px" width="8" height="7" viewBox="0 0 8 7"><rect x="0" y="0" width="8" height="1.3" fill="#b5b5b5"/><rect x="0" y="2.7" width="8" height="1.3" fill="#b5b5b5"/><rect x="0" y="5.4" width="8" height="1.3" fill="#b5b5b5"/></svg>
<div class="a" style="left:973px;top:413px;width:91px;height:14px;background:#3f3f3f"></div>
<svg class="a" style="left:977px;top:415px" width="10" height="10" viewBox="0 0 10 10"><circle cx="4" cy="4" r="3" fill="none" stroke="#dcdcdc" stroke-width="1.2"/><path d="M6.2 6.2L9.3 9.3" stroke="#dcdcdc" stroke-width="1.4"/></svg>
<div class="t" style="left:990.5px;top:415.5px;font-size:8.4px;color:#e4e4e4;letter-spacing:-0.1px">Rodzaj</div>
<svg class="a" style="left:1055px;top:418px" width="6" height="4" viewBox="0 0 6 4"><path d="M0.5 0.5L3 3.2L5.5 0.5" fill="none" stroke="#bbb" stroke-width="0.9"/></svg>
<svg class="a" style="left:1094px;top:414px" width="11" height="10" viewBox="0 0 11 10"><rect x="0.6" y="0.6" width="9.8" height="8.8" fill="none" stroke="#dcdcdc" stroke-width="1.1"/><path d="M1.5 8.5L4 5L5.5 6.5L7.5 4L9.5 8.5Z" fill="#dcdcdc"/></svg>
<svg class="a" style="left:1114px;top:414px" width="10" height="10" viewBox="0 0 10 10"><circle cx="5" cy="5" r="4.3" fill="none" stroke="#dcdcdc" stroke-width="1.1"/><path d="M8.3 1.7L1.7 8.3A4.3 4.3 0 0 0 8.3 1.7Z" fill="#dcdcdc"/></svg>
<svg class="a" style="left:1134px;top:414px" width="10" height="10" viewBox="0 0 10 10"><path d="M0.5 0.5H9.5V2.8H8.6L8.2 1.5H5.7V8.6L6.8 9V9.6H3.2V9L4.3 8.6V1.5H1.8L1.4 2.8H0.5Z" fill="#dcdcdc"/></svg>
<svg class="a" style="left:1154px;top:414px" width="11" height="11" viewBox="0 0 11 11"><rect x="2" y="2" width="7" height="7" fill="none" stroke="#dcdcdc" stroke-width="1.1"/><rect x="0.5" y="0.5" width="3" height="3" fill="#dcdcdc"/><rect x="7.5" y="0.5" width="3" height="3" fill="#dcdcdc"/><rect x="0.5" y="7.5" width="3" height="3" fill="#dcdcdc"/><rect x="7.5" y="7.5" width="3" height="3" fill="#dcdcdc"/></svg>
<svg class="a" style="left:1175px;top:413px" width="10" height="12" viewBox="0 0 10 12"><path d="M3 5V3Q3 0.8 5.3 0.8Q7.5 0.8 7.5 3" fill="none" stroke="#dcdcdc" stroke-width="1.2"/><rect x="1" y="5" width="6.5" height="6" fill="#dcdcdc"/></svg>
<div class="a" style="left:1214.5px;top:416px;width:5px;height:11px;background:#424242;border-radius:2.5px"></div>
<div class="a" style="left:1213.5px;top:411.5px;width:7px;height:7px;background:#eeeeee;border-radius:50%"></div>
<div class="a" style="left:973px;top:436px;width:170px;height:14px;background:#4d4d4d"></div>
<div class="t" style="left:979.5px;top:438.5px;font-size:8.4px;color:#7c7c7c;letter-spacing:-0.1px">Normalnie</div>
<svg class="a" style="left:1134px;top:441px" width="6" height="4" viewBox="0 0 6 4"><path d="M0.5 0.5L3 3.2L5.5 0.5" fill="none" stroke="#707070" stroke-width="0.9"/></svg>
<div class="t" style="left:1150.5px;top:438.5px;font-size:8.4px;color:#7c7c7c;letter-spacing:-0.3px">Krycie:</div>
<div class="a" style="left:1179px;top:436px;width:39px;height:14px;background:#4d4d4d"></div>
<div class="t" style="left:1181px;top:438.5px;font-size:8.4px;color:#6c6c6c">100%</div>
<div class="a" style="left:1207px;top:436px;width:1px;height:14px;background:#555"></div>
<div class="a" style="left:969px;top:454px;width:308px;height:1px;background:#474747"></div>
<div class="t" style="left:975px;top:461.5px;font-size:8.4px;color:#e0e0e0;letter-spacing:-0.1px">Ujednolić:</div>
<svg class="a" style="left:1015px;top:459px" width="13" height="12" viewBox="0 0 13 12"><path d="M5 0.5L9 4.5L7.5 5L6.5 7L2.8 3.3L4.6 2.4Z" fill="#dcdcdc"/><path d="M4.3 5.5L0.8 9" stroke="#dcdcdc" stroke-width="1.2"/><circle cx="8.3" cy="10" r="1.5" fill="none" stroke="#dcdcdc" stroke-width="0.9"/><circle cx="11.3" cy="10" r="1.5" fill="none" stroke="#dcdcdc" stroke-width="0.9"/></svg>
<svg class="a" style="left:1034px;top:459px" width="14" height="12" viewBox="0 0 14 12"><path d="M0.5 4.5Q5 -0.5 9.5 4.5Q5 9.5 0.5 4.5Z" fill="none" stroke="#dcdcdc" stroke-width="1.2"/><circle cx="5" cy="4.5" r="1.7" fill="#dcdcdc"/><circle cx="9.3" cy="10" r="1.5" fill="none" stroke="#dcdcdc" stroke-width="0.9"/><circle cx="12.3" cy="10" r="1.5" fill="none" stroke="#dcdcdc" stroke-width="0.9"/></svg>
<div class="t" style="left:1053px;top:458px;font-size:10px;font-style:italic;color:#dcdcdc;font-family:'Liberation Serif',serif">fx</div>
<svg class="a" style="left:1057px;top:466px" width="9" height="5" viewBox="0 0 9 5"><circle cx="2" cy="2.5" r="1.5" fill="none" stroke="#dcdcdc" stroke-width="0.9"/><circle cx="5.5" cy="2.5" r="1.5" fill="none" stroke="#dcdcdc" stroke-width="0.9"/></svg>
<div class="a" style="left:1143px;top:461px;width:9px;height:9px;background:#ececec;border-radius:1px"></div>
<svg class="a" style="left:1143.5px;top:461.5px" width="8" height="8" viewBox="0 0 8 8"><path d="M1.3 4L3.3 6L6.8 1.8" fill="none" stroke="#333" stroke-width="1.4"/></svg>
<div class="t" style="left:1155px;top:461.5px;font-size:8.4px;color:#e4e4e4;letter-spacing:-0.1px">Wybierz klatkę 1</div>
<div class="a" style="left:969px;top:476px;width:308px;height:1px;background:#474747"></div>
<div class="t" style="left:974.5px;top:484.5px;font-size:8.4px;color:#7a7a7a;letter-spacing:-0.2px">Zablokuj:</div>
<svg class="a" style="left:1016px;top:484px" width="10" height="10" viewBox="0 0 10 10"><rect x="0.5" y="0.5" width="9" height="9" fill="none" stroke="#7a7a7a" stroke-width="1"/><rect x="0.5" y="0.5" width="4.5" height="4.5" fill="#7a7a7a"/><rect x="5" y="5" width="4.5" height="4.5" fill="#7a7a7a"/></svg>
<svg class="a" style="left:1035px;top:483px" width="11" height="12" viewBox="0 0 11 12"><path d="M10 0.5L4 7" stroke="#7a7a7a" stroke-width="1.6"/><path d="M4 6.5C2 6.5 1.5 8.5 1.5 9.5C1.5 10.5 1 11 0.5 11.3C2.5 11.8 5 11 5 8Z" fill="#7a7a7a"/></svg>
<svg class="a" style="left:1052px;top:483px" width="11" height="12" viewBox="0 0 11 12"><path d="M5.5 1V11M0.5 6H10.5" stroke="#7a7a7a" stroke-width="1.1"/><path d="M5.5 0.5L3.7 2.5H7.3ZM5.5 11.5L3.7 9.5H7.3ZM0 6L2 4.2V7.8ZM11 6L9 4.2V7.8Z" fill="#7a7a7a"/></svg>
<svg class="a" style="left:1070px;top:483px" width="12" height="11" viewBox="0 0 12 11"><path d="M2.5 0V9.5H12M0 2.5H9.5V7" fill="none" stroke="#7a7a7a" stroke-width="1.1"/></svg>
<svg class="a" style="left:1089px;top:482px" width="10" height="12" viewBox="0 0 10 12"><path d="M2.5 5.5V3.5Q2.5 1 5 1Q7.5 1 7.5 3.5V5.5" fill="none" stroke="#7a7a7a" stroke-width="1.2"/><rect x="1" y="5.5" width="8" height="6" fill="#7a7a7a"/></svg>
<div class="t" style="left:1127px;top:484.5px;font-size:8.4px;color:#7a7a7a;letter-spacing:-0.25px">Wypełnienie:</div>
<div class="a" style="left:1179px;top:482px;width:39px;height:14px;background:#4d4d4d"></div>
<div class="t" style="left:1181px;top:484.5px;font-size:8.4px;color:#6c6c6c">100%</div>
<div class="a" style="left:1207px;top:482px;width:1px;height:14px;background:#555"></div>
<div class="a" style="left:969px;top:500px;width:296px;height:164px;background:#535353;overflow:hidden">
<div class="a" style="left:26px;top:0px;width:269px;height:34px;background:#6a6a6a"></div>
<div class="a" style="left:0;top:33px;width:296px;height:1px;background:#464646"></div>
<div class="a" style="left:9px;top:13px;width:10px;height:10px;border:1px solid #4a4a4a"></div>
<div class="a" style="left:29px;top:5px;width:25px;height:26px;background-color:#f4f4f4;background-image:linear-gradient(45deg,#d8d8d8 25%,transparent 25%,transparent 75%,#d8d8d8 75%),linear-gradient(45deg,#d8d8d8 25%,transparent 25%,transparent 75%,#d8d8d8 75%);background-size:4px 4px;background-position:0 0,2px 2px"></div>
<svg class="a" style="left:29px;top:5px" width="25" height="26" viewBox="0 0 25 26"><use href="#spin" transform="translate(12.5 13) scale(0.045) rotate(3)"/></svg>
<div class="t" style="left:63.5px;top:13.5px;font-size:8.5px;color:#ececec;letter-spacing:-0.1px">Warstwa 2 kopia 11</div>
<div class="a" style="left:0;top:67px;width:296px;height:1px;background:#464646"></div>
<div class="a" style="left:9px;top:47px;width:10px;height:10px;border:1px solid #4a4a4a"></div>
<div class="a" style="left:29px;top:39px;width:25px;height:26px;background-color:#f4f4f4;background-image:linear-gradient(45deg,#d8d8d8 25%,transparent 25%,transparent 75%,#d8d8d8 75%),linear-gradient(45deg,#d8d8d8 25%,transparent 25%,transparent 75%,#d8d8d8 75%);background-size:4px 4px;background-position:0 0,2px 2px"></div>
<svg class="a" style="left:29px;top:39px" width="25" height="26" viewBox="0 0 25 26"><use href="#spin" transform="translate(12.5 13) scale(0.045) rotate(-30)"/></svg>
<div class="t" style="left:63.5px;top:47.5px;font-size:8.5px;color:#ececec;letter-spacing:-0.1px">Warstwa 2 kopia 10</div>
<div class="a" style="left:0;top:101px;width:296px;height:1px;background:#464646"></div>
<div class="a" style="left:9px;top:81px;width:10px;height:10px;border:1px solid #4a4a4a"></div>
<div class="a" style="left:29px;top:73px;width:25px;height:26px;background-color:#f4f4f4;background-image:linear-gradient(45deg,#d8d8d8 25%,transparent 25%,transparent 75%,#d8d8d8 75%),linear-gradient(45deg,#d8d8d8 25%,transparent 25%,transparent 75%,#d8d8d8 75%);background-size:4px 4px;background-position:0 0,2px 2px"></div>
<svg class="a" style="left:29px;top:73px" width="25" height="26" viewBox="0 0 25 26"><use href="#spin" transform="translate(12.5 13) scale(0.045) rotate(53)"/></svg>
<div class="t" style="left:63.5px;top:81.5px;font-size:8.5px;color:#ececec;letter-spacing:-0.1px">Warstwa 2 kopia 9</div>
<div class="a" style="left:0;top:135px;width:296px;height:1px;background:#464646"></div>
<div class="a" style="left:9px;top:115px;width:10px;height:10px;border:1px solid #4a4a4a"></div>
<div class="a" style="left:29px;top:107px;width:25px;height:26px;background-color:#f4f4f4;background-image:linear-gradient(45deg,#d8d8d8 25%,transparent 25%,transparent 75%,#d8d8d8 75%),linear-gradient(45deg,#d8d8d8 25%,transparent 25%,transparent 75%,#d8d8d8 75%);background-size:4px 4px;background-position:0 0,2px 2px"></div>
<svg class="a" style="left:29px;top:107px" width="25" height="26" viewBox="0 0 25 26"><use href="#spin" transform="translate(12.5 13) scale(0.045) rotate(23)"/></svg>
<div class="t" style="left:63.5px;top:115.5px;font-size:8.5px;color:#ececec;letter-spacing:-0.1px">Warstwa 2 kopia 8</div>
<div class="a" style="left:0;top:169px;width:296px;height:1px;background:#464646"></div>
<div class="a" style="left:9px;top:149px;width:10px;height:10px;border:1px solid #4a4a4a"></div>
<div class="a" style="left:29px;top:141px;width:25px;height:26px;background-color:#f4f4f4;background-image:linear-gradient(45deg,#d8d8d8 25%,transparent 25%,transparent 75%,#d8d8d8 75%),linear-gradient(45deg,#d8d8d8 25%,transparent 25%,transparent 75%,#d8d8d8 75%);background-size:4px 4px;background-position:0 0,2px 2px"></div>
<svg class="a" style="left:29px;top:141px" width="25" height="26" viewBox="0 0 25 26"><use href="#spin" transform="translate(12.5 13) scale(0.045) rotate(3)"/></svg>
<div class="t" style="left:63.5px;top:149.5px;font-size:8.5px;color:#ececec;letter-spacing:-0.1px">Warstwa 2 kopia 7</div>
<svg class="a" style="left:26px;top:2px" width="31" height="32" viewBox="0 0 31 32"><path d="M0.5 8V0.5H8M23 0.5H30.5V8M30.5 24V31.5H23M8 31.5H0.5V24" fill="none" stroke="#f0f0f0" stroke-width="1"/></svg>
<div class="a" style="left:24px;top:0;width:1px;height:164px;background:#474747"></div>
</div>
<div class="a" style="left:1265px;top:500px;width:12px;height:164px;background:#4c4c4c"></div>
<div class="a" style="left:1266px;top:514px;width:9px;height:46px;background:#5e5e5e"></div>
<svg class="a" style="left:1267px;top:506px" width="8" height="5" viewBox="0 0 8 5"><path d="M0.5 4.5L4 1L7.5 4.5" fill="none" stroke="#8a8a8a" stroke-width="1"/></svg>
<svg class="a" style="left:1267px;top:654px" width="8" height="5" viewBox="0 0 8 5"><path d="M0.5 0.5L4 4L7.5 0.5" fill="none" stroke="#8a8a8a" stroke-width="1"/></svg>
<div class="a" style="left:969px;top:664px;width:308px;height:1px;background:#474747"></div>
<svg class="a" style="left:1109px;top:672px" width="11" height="6" viewBox="0 0 11 6"><rect x="0.6" y="0.6" width="5" height="4.8" rx="2.4" fill="none" stroke="#8e8e8e" stroke-width="1.1"/><rect x="5.4" y="0.6" width="5" height="4.8" rx="2.4" fill="none" stroke="#8e8e8e" stroke-width="1.1"/><path d="M3 3H8" stroke="#8e8e8e" stroke-width="1.1"/></svg>
<div class="t" style="left:1132px;top:668px;font-size:11px;font-style:italic;color:#dcdcdc;font-family:'Liberation Serif',serif">fx</div>
<svg class="a" style="left:1153px;top:670px" width="12" height="10" viewBox="0 0 12 10"><rect x="0" y="0" width="12" height="10" fill="#dcdcdc"/><ellipse cx="6" cy="5" rx="3.2" ry="3" fill="#535353"/></svg>
<svg class="a" style="left:1177px;top:669px" width="12" height="12" viewBox="0 0 12 12"><circle cx="5.5" cy="5.5" r="4.8" fill="none" stroke="#dcdcdc" stroke-width="1.2"/><path d="M9 2L2 9A4.8 4.8 0 0 0 9 2Z" fill="#dcdcdc"/></svg>
<svg class="a" style="left:1198px;top:670px" width="13" height="10" viewBox="0 0 13 10"><path d="M0 1H5L6 2.5H13V10H0Z" fill="#dcdcdc"/></svg>
<svg class="a" style="left:1222px;top:669px" width="11" height="11" viewBox="0 0 11 11"><path d="M0.7 0.7H10.3V7L7 10.3H3.5V4" fill="none" stroke="#dcdcdc" stroke-width="1.3"/><path d="M7 10.3V7H10.3" fill="none" stroke="#dcdcdc" stroke-width="1.1"/></svg>
<svg class="a" style="left:1244px;top:668px" width="10" height="12" viewBox="0 0 10 12"><path d="M0 2.3H10M3.5 2.3V0.7H6.5V2.3" fill="none" stroke="#dcdcdc" stroke-width="1.2"/><path d="M1.3 3.5H8.7V11.3H1.3Z" fill="none" stroke="#dcdcdc" stroke-width="1.2"/><path d="M3.8 5V10M6.2 5V10" stroke="#dcdcdc" stroke-width="1"/></svg>
<svg class="a" style="left:1268px;top:55px" width="7" height="5" viewBox="0 0 7 5"><path d="M0.5 0.5V4.5L3 2.5ZM4 0.5V4.5L6.5 2.5Z" fill="#a0a0a0"/></svg>
<div class="a" style="left:917px;top:662px;width:17px;height:22px;background:#4a4a4a"></div>
<svg class="a" style="left:1143px;top:679px" width="3" height="2" viewBox="0 0 3 2"><path d="M0 0H3L1.5 2Z" fill="#e0e0e0"/></svg>
<svg class="a" style="left:1187px;top:679px" width="3" height="2" viewBox="0 0 3 2"><path d="M0 0H3L1.5 2Z" fill="#e0e0e0"/></svg>
</body></html>
